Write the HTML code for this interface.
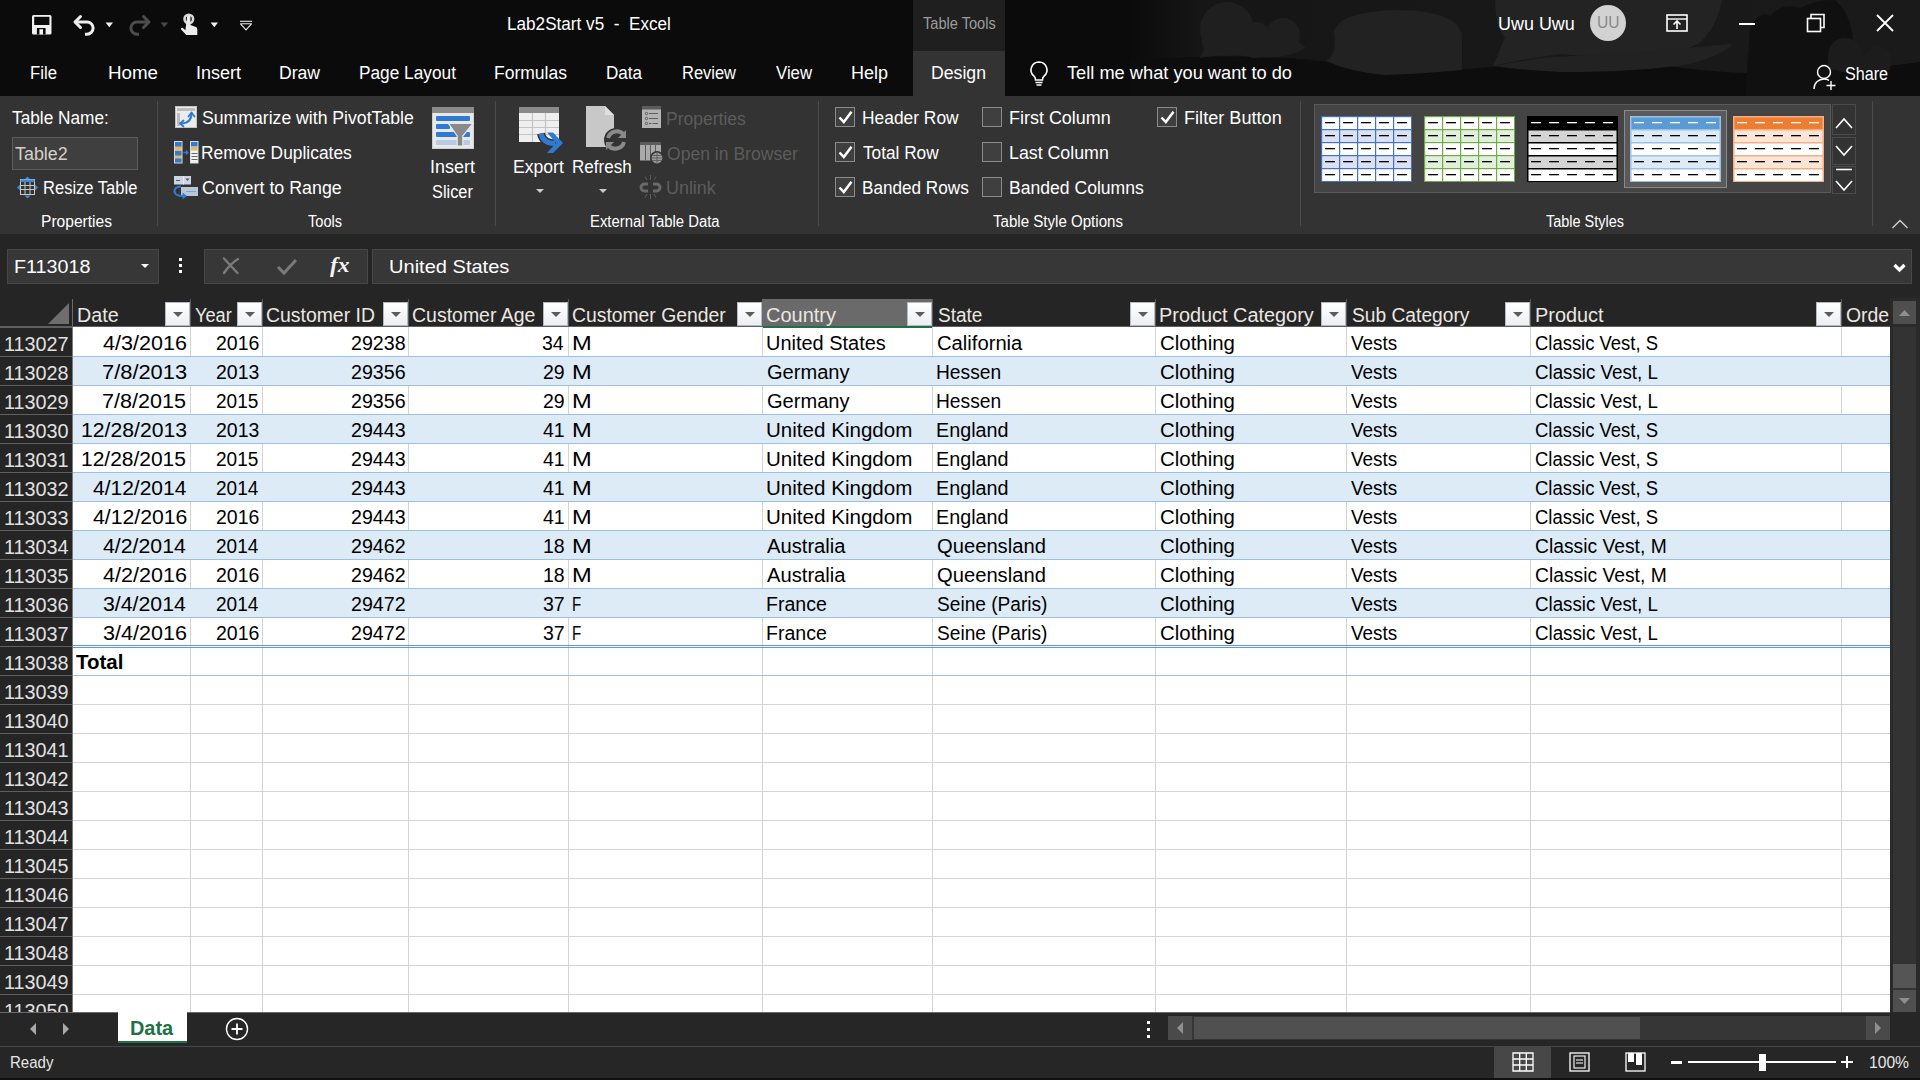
<!DOCTYPE html>
<html><head><meta charset="utf-8"><style>
*{margin:0;padding:0}
html,body{width:1920px;height:1080px;overflow:hidden;background:#222;}
body{position:relative;font-family:"Liberation Sans",sans-serif;}
.r{position:absolute;display:block}
.t{position:absolute;white-space:pre;line-height:1;transform-origin:left center}
.fb{position:absolute;width:25px;height:24px;box-sizing:border-box;border:1px solid #b4bac4;background:linear-gradient(#ffffff,#eceef2)}
.fb::after{content:"";position:absolute;left:7px;top:9px;border-left:5px solid transparent;border-right:5px solid transparent;border-top:5px solid #5c5c5c}
</style></head><body>
<div class="r" style="left:0px;top:0px;width:1920px;height:96px;background:#0b0b0b;"></div>
<svg class="r" style="left:0;top:0" width="1920" height="96" viewBox="0 0 1920 96">
<defs>
<linearGradient id="gbg" x1="0" x2="1" y1="0" y2="0"><stop offset="0" stop-color="#0b0b0b"></stop><stop offset="0.09" stop-color="#161616"></stop><stop offset="0.5" stop-color="#181818"></stop><stop offset="1" stop-color="#1a1a1a"></stop></linearGradient>
<linearGradient id="gv" x1="0" x2="0" y1="0" y2="1"><stop offset="0" stop-color="#0b0b0b" stop-opacity="0"></stop><stop offset="1" stop-color="#0c0c0c" stop-opacity="1"></stop></linearGradient>
</defs>
<rect x="1130" y="0" width="790" height="96" fill="url(#gbg)"></rect>
<path d="M1130 60 Q1250 52 1330 62 Q1420 76 1500 66 Q1600 56 1700 70 Q1800 80 1920 62 L1920 96 L1130 96Z" fill="#0d0d0d"></path>
<path d="M1745 96 L1750 30 Q1758 10 1770 16 Q1782 2 1800 8 Q1815 0 1835 0 Q1856 20 1852 50 Q1846 70 1830 96Z" fill="#101010"></path>
<g fill="#1f1f1f">
<circle cx="1227" cy="29" r="27"></circle><circle cx="1283" cy="35" r="17"></circle><circle cx="1255" cy="40" r="18"></circle>
<path d="M1202 36 L1296 40 L1306 48 Q1285 60 1255 57 Q1225 53 1199 58 Q1206 50 1202 44Z"></path>
</g>
<path fill="#222" d="M1334 32 Q1338 12 1395 10 Q1455 10 1462 34 L1462 70 Q1420 74 1385 75 Q1350 72 1326 61 Q1337 56 1334 32Z"></path>
<path fill="#232323" d="M1495 0 L1722 0 Q1716 30 1698 44 Q1672 56 1640 58 Q1600 58 1560 54 Q1520 60 1493 66 Q1500 50 1505 37 Q1496 30 1495 0Z"></path>
<path fill="#222" d="M1540 58 Q1640 52 1733 44 Q1720 56 1690 64 Q1640 72 1560 72 Q1520 70 1493 66Z"></path>
<g fill="#1c1c1c"><circle cx="1845" cy="55" r="17"></circle><circle cx="1878" cy="59" r="13"></circle><rect x="1828" y="55" width="62" height="15"></rect></g>
</svg>
<div class="r" style="left:913px;top:0px;width:92px;height:51px;background:#1f1f1f;"></div>
<div class="r" style="left:913px;top:51px;width:92px;height:45px;background:#333333;"></div>
<svg class="r" style="left:0px;top:0px;" width="260" height="48" viewBox="0 0 260 48">
<rect x="32" y="15" width="19.5" height="19.5" rx="1.5" fill="#f0f0f0"></rect>
<rect x="34.2" y="16.8" width="15.2" height="8.2" fill="#0b0b0b"></rect>
<rect x="36.9" y="28" width="8.7" height="6.5" fill="#0b0b0b"></rect>
<rect x="39.4" y="29.2" width="3.6" height="5.3" fill="#f0f0f0"></rect>
<path d="M75.5 22 H87 A6.1 6.1 0 0 1 87 34.2 H85" fill="none" stroke="#eeeeee" stroke-width="3"></path>
<path d="M80.5 16.5 L75 22 L80.5 27.5" fill="none" stroke="#eeeeee" stroke-width="3" stroke-linecap="round" stroke-linejoin="round"></path>
<path d="M105.6 22.5 h7.4 l-3.7 4.7z" fill="#f0f0f0"></path>
<path d="M148.5 22 H137 A6.1 6.1 0 0 0 137 34.2 H139" fill="none" stroke="#4d4d4d" stroke-width="3"></path>
<path d="M143.5 16.5 L149 22 L143.5 27.5" fill="none" stroke="#4d4d4d" stroke-width="3" stroke-linecap="round" stroke-linejoin="round"></path>
<path d="M160.6 22.5 h7.4 l-3.7 4.7z" fill="#4a4a4a"></path>
<circle cx="188.8" cy="19" r="4.3" fill="none" stroke="#d8d8d8" stroke-width="2.6"></circle>
<path d="M187.2 15.5 h3.2 v9.5 l5.5 2 q1.4 .6 1.4 2.2 v5.8 h-11 l-5.2-5.5 q-.6-.9.3-1.5 q.9-.6 1.8.2 l2.2 2.1z" fill="#ececec"></path>
<path d="M210.6 22.5 h7.4 l-3.7 4.7z" fill="#f0f0f0"></path>
<path d="M240 21.3 h12" stroke="#e8e8e8" stroke-width="1.1"></path>
<path d="M240.5 23.8 h11 l-5.5 6z" fill="none" stroke="#e8e8e8" stroke-width="1.1" stroke-linejoin="round"></path>
</svg>
<span class="t " style="left: 506.52px; top: 16.19px; font-size: 17.5px; color: rgb(255, 255, 255); transform: scaleX(0.9794);">Lab2Start v5  -  Excel</span>
<span class="t " style="left: 923px; top: 16.46px; font-size: 16px; color: rgb(156, 156, 156); transform: scaleX(0.912);">Table Tools</span>
<span class="t " style="left: 1497.97px; top: 16.19px; font-size: 17.5px; color: rgb(255, 255, 255); transform: scaleX(1.0253);">Uwu Uwu</span>
<div class="r" style="left:1590px;top:5px;width:36px;height:36px;border-radius:50%;background:#d2d2d2"></div>
<span class="t " style="left: 1597.03px; top: 15.46px; font-size: 16px; color: rgb(138, 138, 138); transform: scaleX(0.9743);">UU</span>
<svg class="r" style="left:1665px;top:13px;" width="24" height="20" viewBox="0 0 24 20"><rect x="2" y="2" width="20" height="16" fill="none" stroke="#fff" stroke-width="1.6"></rect><path d="M2 6h20" stroke="#fff" stroke-width="1.4"></path><path d="M12 16V8 M8.5 11.5 L12 8 L15.5 11.5" stroke="#fff" stroke-width="1.6" fill="none"></path></svg>
<div class="r" style="left:1739px;top:23px;width:16px;height:2px;background:#fff;"></div>
<svg class="r" style="left:1805px;top:12px;" width="22" height="22" viewBox="0 0 22 22"><rect x="2.5" y="6.5" width="13" height="13" fill="none" stroke="#fff" stroke-width="1.6"></rect><path d="M6 6.5V2.5h13v13h-3.5" fill="none" stroke="#fff" stroke-width="1.6"></path></svg>
<svg class="r" style="left:1875px;top:13px;" width="20" height="20" viewBox="0 0 20 20"><path d="M2 2L18 18M18 2L2 18" stroke="#fff" stroke-width="1.8"></path></svg>
<span class="t " style="left: 30.07px; top: 64.26px; font-size: 18px; color: rgb(255, 255, 255); transform: scaleX(0.9288);">File</span>
<span class="t " style="left: 107.96px; top: 64.26px; font-size: 18px; color: rgb(255, 255, 255); transform: scaleX(1.0425);">Home</span>
<span class="t " style="left: 196px; top: 64.26px; font-size: 18px; color: rgb(255, 255, 255); transform: scaleX(0.9996);">Insert</span>
<span class="t " style="left: 279.02px; top: 64.26px; font-size: 18px; color: rgb(255, 255, 255); transform: scaleX(0.9761);">Draw</span>
<span class="t " style="left: 359.04px; top: 64.26px; font-size: 18px; color: rgb(255, 255, 255); transform: scaleX(0.9592);">Page Layout</span>
<span class="t " style="left: 494.03px; top: 64.26px; font-size: 18px; color: rgb(255, 255, 255); transform: scaleX(0.9728);">Formulas</span>
<span class="t " style="left: 606.05px; top: 64.26px; font-size: 18px; color: rgb(255, 255, 255); transform: scaleX(0.9471);">Data</span>
<span class="t " style="left: 682.09px; top: 64.26px; font-size: 18px; color: rgb(255, 255, 255); transform: scaleX(0.915);">Review</span>
<span class="t " style="left: 776px; top: 64.26px; font-size: 18px; color: rgb(255, 255, 255); transform: scaleX(0.9322);">View</span>
<span class="t " style="left: 851px; top: 64.26px; font-size: 18px; color: rgb(255, 255, 255); transform: scaleX(0.9998);">Help</span>
<span class="t " style="left: 931.02px; top: 64.26px; font-size: 18px; color: rgb(255, 255, 255); transform: scaleX(0.9811);">Design</span>
<svg class="r" style="left:1027px;top:59px;" width="24" height="28" viewBox="0 0 24 28"><path d="M12 3a8 8 0 0 0-5 14.2c1 .9 1.5 2 1.5 3.3V21h7v-.5c0-1.3.5-2.4 1.5-3.3A8 8 0 0 0 12 3z" fill="none" stroke="#fff" stroke-width="1.6"></path><path d="M8.5 23.5h7M9.5 26h5" stroke="#fff" stroke-width="1.6"></path></svg>
<span class="t " style="left: 1067px; top: 64.26px; font-size: 18px; color: rgb(255, 255, 255); transform: scaleX(1.013);">Tell me what you want to do</span>
<svg class="r" style="left:1812px;top:63px;" width="26" height="28" viewBox="0 0 26 28"><circle cx="12" cy="9" r="6.5" fill="none" stroke="#fff" stroke-width="1.4"></circle><path d="M2 26c0-6 4.5-10 10-10 2 0 3.5.5 5 1.3" fill="none" stroke="#fff" stroke-width="1.4"></path><path d="M19 18v9M14.5 22.5h9" stroke="#fff" stroke-width="1.4"></path></svg>
<span class="t " style="left: 1845px; top: 64.76px; font-size: 18px; color: rgb(255, 255, 255); transform: scaleX(0.8954);">Share</span>
<div class="r" style="left:0px;top:96px;width:1920px;height:138px;background:#333333;"></div>
<div class="r" style="left:157px;top:101px;width:1px;height:125px;background:#4a4a4a;"></div>
<div class="r" style="left:495px;top:101px;width:1px;height:125px;background:#4a4a4a;"></div>
<div class="r" style="left:818px;top:101px;width:1px;height:125px;background:#4a4a4a;"></div>
<div class="r" style="left:1300px;top:101px;width:1px;height:125px;background:#4a4a4a;"></div>
<div class="r" style="left:1872px;top:101px;width:1px;height:125px;background:#4a4a4a;"></div>
<svg class="r" style="left:0px;top:96px;" width="210" height="110" viewBox="0 0 210 110">
<g transform="translate(0,-96)">
<path d="M27.5 176.5 l3 3h-6z M27.5 198.5 l3-3h-6z M17 187.5 l3-3v6z M38 187.5 l-3-3v6z" fill="#3b8ad8"></path>
<rect x="20.5" y="179.5" width="14" height="15" fill="#333" stroke="#c8c8c8" stroke-width="1"></rect>
<rect x="20.5" y="179.5" width="14" height="2.5" fill="#3b8ad8"></rect>
<path d="M20.5 185.5h14M20.5 189.5h14M25 182v12.5M30 182v12.5" stroke="#c8c8c8" stroke-width="1"></path>
<rect x="175.5" y="106.5" width="21" height="21" fill="#ececec" stroke="#c4c4c4"></rect>
<rect x="177" y="108" width="18" height="3" fill="#bdbdbd"></rect><rect x="177" y="113" width="3" height="13" fill="#bdbdbd"></rect>
<path d="M180.5 123.5 C187 123.5 191.5 120.5 191.5 113.5" fill="none" stroke="#2f7bd3" stroke-width="1.9"></path>
<path d="M183.5 120.5 L180 123.5 L183.5 126.5 M188.5 116.5 L191.5 112.5 L194.5 116.5" fill="none" stroke="#2f7bd3" stroke-width="1.9" stroke-linecap="round" stroke-linejoin="round"></path>
<rect x="174.5" y="141.5" width="7.5" height="21.5" fill="#e6b56a" stroke="#dcdcdc" stroke-width="1"></rect>
<rect x="175" y="142" width="6.5" height="4.5" fill="#2f7bd3"></rect><rect x="175" y="151" width="6.5" height="4.5" fill="#2f7bd3"></rect><rect x="175" y="158.5" width="6.5" height="4" fill="#2f7bd3"></rect>
<rect x="190.5" y="141.5" width="7.5" height="21.5" fill="#f2f2f2" stroke="#dcdcdc" stroke-width="1"></rect>
<rect x="191" y="142" width="6.5" height="4.5" fill="#2f7bd3"></rect><rect x="191" y="147" width="6.5" height="3.5" fill="#e6b56a"></rect>
<path d="M191.5 153.5h6M191.5 156.5h6M191.5 159.5h6" stroke="#444" stroke-width="0.8"></path>
<path d="M183.5 152.5h4.5 M186 150.5l2 2-2 2" stroke="#2f7bd3" stroke-width="1.3" fill="none"></path>
<rect x="174" y="176" width="17" height="8.5" fill="#c9d5e4"></rect><path d="M176 180.5h4" stroke="#555" stroke-width="1"></path><rect x="183" y="176" width="1" height="8.5" fill="#ececec"></rect><path d="M185.5 178.5h4l-2 2.5z" fill="#555"></path>
<rect x="181" y="187" width="17" height="9" fill="#b8c8dc"></rect><path d="M186 191.5h10" stroke="#8aa0ba" stroke-width="1"></path>
<path d="M181 186.5 Q174 187 174.5 191.5 Q175 196 183 196" fill="none" stroke="#2f7bd3" stroke-width="2.2"></path>
<path d="M182.5 192.5 l4.5 3.5-4.5 3.5z" fill="#2f7bd3"></path>
</g></svg>
<span class="t " style="left: 12px; top: 110.19px; font-size: 17.5px; color: rgb(255, 255, 255); transform: scaleX(0.9858);">Table Name:</span>
<div class="r" style="left:12px;top:137px;width:124px;height:31px;background:#3f3f3f;border:1px solid #5c5c5c"></div>
<span class="t " style="left: 15px; top: 146.19px; font-size: 17.5px; color: rgb(214, 207, 198); transform: scaleX(1.0229);">Table2</span>
<span class="t " style="left: 43.06px; top: 180.19px; font-size: 17.5px; color: rgb(255, 255, 255); transform: scaleX(0.9446);">Resize Table</span>
<span class="t " style="left: 41.03px; top: 214.46px; font-size: 16px; color: rgb(255, 255, 255); transform: scaleX(0.9733);">Properties</span>
<span class="t " style="left: 202px; top: 110.19px; font-size: 17.5px; color: rgb(255, 255, 255); transform: scaleX(1.0079);">Summarize with PivotTable</span>
<span class="t " style="left: 201.01px; top: 145.19px; font-size: 17.5px; color: rgb(255, 255, 255); transform: scaleX(0.9935);">Remove Duplicates</span>
<span class="t " style="left: 202px; top: 180.19px; font-size: 17.5px; color: rgb(255, 255, 255); transform: scaleX(1.0188);">Convert to Range</span>
<svg class="r" style="left:0px;top:0px;" width="480" height="160" viewBox="0 0 480 160"><rect x="432.5" y="107.5" width="41" height="41" fill="#e8e8e8" stroke="#cfcfcf"></rect><rect x="432" y="107" width="42" height="6" fill="#8a8a8a"></rect>
<rect x="436" y="116" width="34" height="5" rx="1" fill="#2f7bd3"></rect><rect x="436" y="124" width="14" height="5" rx="1" fill="#2f7bd3"></rect><rect x="436" y="132" width="34" height="5" rx="1" fill="#2f7bd3"></rect><rect x="436" y="140" width="34" height="5" rx="1" fill="#b7cbe2"></rect>
<path d="M448.5 123.5 H473 L462.8 136 V146 H457.2 V136Z" fill="#8a8a8a" stroke="#e8e8e8" stroke-width="1.2"></path></svg>
<span class="t " style="left: 429.97px; top: 159.19px; font-size: 17.5px; color: rgb(255, 255, 255); transform: scaleX(1.0255);">Insert</span>
<span class="t " style="left: 432px; top: 183.69px; font-size: 17.5px; color: rgb(255, 255, 255); transform: scaleX(0.9333);">Slicer</span>
<span class="t " style="left: 308px; top: 214.46px; font-size: 16px; color: rgb(255, 255, 255); transform: scaleX(0.9103);">Tools</span>
<svg class="r" style="left:500px;top:100px;" width="80" height="60" viewBox="0 0 80 60"><rect x="19" y="7" width="40" height="35" fill="#efefef"></rect><rect x="19" y="7" width="40" height="6" fill="#8a8a8a"></rect>
<path d="M19 20.5h40M19 27.5h40M19 34.5h40M32.5 13v29M45.5 13v29" stroke="#c4c4c4" stroke-width="1.2"></path>
<path d="M41 33.5 Q43 43.5 55 43.5" fill="none" stroke="#333" stroke-width="8"></path>
<path d="M41 33.5 Q43 43.5 55 43.5" fill="none" stroke="#2f7bd3" stroke-width="5"></path>
<path d="M53 32.5 L63 43 L53 53 H47 L56 43 L47 32.5Z" fill="#2f7bd3"></path></svg>
<span class="t " style="left: 512.99px; top: 159.19px; font-size: 17.5px; color: rgb(255, 255, 255); transform: scaleX(1.0057);">Export</span>
<svg class="r" style="left:534px;top:187px;" width="12" height="8" viewBox="0 0 12 8"><path d="M2 2h8l-4 4z" fill="#ccc"></path></svg>
<svg class="r" style="left:584px;top:104px;" width="46" height="50" viewBox="0 0 46 50"><path d="M2 2h19l9 9v32H2z" fill="#c8c8c8"></path><path d="M21 2v9h9" fill="#e0e0e0"></path><circle cx="32" cy="36" r="12" fill="#333"></circle><path d="M24 34a9 9 0 0 1 16-3 M40 38a9 9 0 0 1-16 3" stroke="#8a8a8a" stroke-width="4" fill="none"></path><path d="M42 26v8h-8z M22 46v-8h8z" fill="#8a8a8a"></path></svg>
<span class="t " style="left: 572.03px; top: 159.19px; font-size: 17.5px; color: rgb(255, 255, 255); transform: scaleX(0.9741);">Refresh</span>
<svg class="r" style="left:597px;top:187px;" width="12" height="8" viewBox="0 0 12 8"><path d="M2 2h8l-4 4z" fill="#ccc"></path></svg>
<svg class="r" style="left:630px;top:100px;" width="40" height="105" viewBox="0 0 40 105"><g transform="translate(-630,-100)">
<rect x="642" y="106" width="19" height="22" fill="#b4b4b4"></rect><rect x="642" y="106" width="19" height="3.5" fill="#5c5c5c"></rect>
<circle cx="646.5" cy="113.5" r="1.2" fill="none" stroke="#555" stroke-width="0.9"></circle><circle cx="646.5" cy="118.5" r="1.2" fill="none" stroke="#555" stroke-width="0.9"></circle><circle cx="646.5" cy="123.5" r="1.2" fill="none" stroke="#555" stroke-width="0.9"></circle>
<path d="M649 113.5h9M649 118.5h9M649 123.5h2.5M652.5 123.5h5.5" stroke="#555" stroke-width="0.9"></path>
<rect x="640" y="142" width="21" height="18.5" fill="#aaaaaa"></rect><rect x="640" y="142" width="21" height="3" fill="#5c5c5c"></rect>
<path d="M645.5 145v15.5M650.5 145v15.5M655.5 145v15.5" stroke="#5c5c5c" stroke-width="1"></path>
<circle cx="657" cy="158" r="6.2" fill="#999" stroke="#333" stroke-width="1.6"></circle>
<path d="M651.5 158h11M657 152.5v11M652.5 155.5h9M652.5 160.5h9" stroke="#555" stroke-width="0.8"></path>
<path d="M648 184 H644.5 a3.3 3.3 0 0 0 0 7 H648 M653 184 H656.5 a3.3 3.3 0 0 1 0 7 H653" stroke="#686868" stroke-width="3" fill="none"></path>
<path d="M650.5 175v5M645 176.5l2 3.5M656 176.5l-2 3.5M650.5 194v5M645 197.5l2-3.5M656 197.5l-2-3.5" stroke="#5e5e5e" stroke-width="1"></path>
</g></svg>
<span class="t " style="left: 666px; top: 110.69px; font-size: 17.5px; color: rgb(92, 92, 92); transform: scaleX(0.9999);">Properties</span>
<span class="t " style="left: 667px; top: 145.69px; font-size: 17.5px; color: rgb(92, 92, 92); transform: scaleX(1.0038);">Open in Browser</span>
<span class="t " style="left: 665.98px; top: 180.19px; font-size: 17.5px; color: rgb(92, 92, 92); transform: scaleX(1.0234);">Unlink</span>
<span class="t " style="left: 590.07px; top: 214.46px; font-size: 16px; color: rgb(255, 255, 255); transform: scaleX(0.9298);">External Table Data</span>
<svg class="r" style="left:835px;top:107px;" width="20" height="20" viewBox="0 0 20 20"><rect x="0.5" y="0.5" width="19" height="19" fill="#3f3f3f" stroke="#8a8a8a"></rect><path d="M4.5 10.5 L8.8 15 L16.5 4.8" stroke="#fff" stroke-width="2.5" fill="none"></path></svg>
<svg class="r" style="left:835px;top:142px;" width="20" height="20" viewBox="0 0 20 20"><rect x="0.5" y="0.5" width="19" height="19" fill="#3f3f3f" stroke="#8a8a8a"></rect><path d="M4.5 10.5 L8.8 15 L16.5 4.8" stroke="#fff" stroke-width="2.5" fill="none"></path></svg>
<svg class="r" style="left:835px;top:177px;" width="20" height="20" viewBox="0 0 20 20"><rect x="0.5" y="0.5" width="19" height="19" fill="#3f3f3f" stroke="#8a8a8a"></rect><path d="M4.5 10.5 L8.8 15 L16.5 4.8" stroke="#fff" stroke-width="2.5" fill="none"></path></svg>
<svg class="r" style="left:982px;top:107px;" width="20" height="20" viewBox="0 0 20 20"><rect x="0.5" y="0.5" width="19" height="19" fill="#3f3f3f" stroke="#8a8a8a"></rect></svg>
<svg class="r" style="left:982px;top:142px;" width="20" height="20" viewBox="0 0 20 20"><rect x="0.5" y="0.5" width="19" height="19" fill="#3f3f3f" stroke="#8a8a8a"></rect></svg>
<svg class="r" style="left:982px;top:177px;" width="20" height="20" viewBox="0 0 20 20"><rect x="0.5" y="0.5" width="19" height="19" fill="#3f3f3f" stroke="#8a8a8a"></rect></svg>
<svg class="r" style="left:1157px;top:107px;" width="20" height="20" viewBox="0 0 20 20"><rect x="0.5" y="0.5" width="19" height="19" fill="#3f3f3f" stroke="#8a8a8a"></rect><path d="M4.5 10.5 L8.8 15 L16.5 4.8" stroke="#fff" stroke-width="2.5" fill="none"></path></svg>
<span class="t " style="left: 862.01px; top: 109.69px; font-size: 17.5px; color: rgb(255, 255, 255); transform: scaleX(0.9935);">Header Row</span>
<span class="t " style="left: 863px; top: 144.69px; font-size: 17.5px; color: rgb(255, 255, 255); transform: scaleX(0.9845);">Total Row</span>
<span class="t " style="left: 862.02px; top: 179.69px; font-size: 17.5px; color: rgb(255, 255, 255); transform: scaleX(0.9796);">Banded Rows</span>
<span class="t " style="left: 1008.97px; top: 109.69px; font-size: 17.5px; color: rgb(255, 255, 255); transform: scaleX(1.0262);">First Column</span>
<span class="t " style="left: 1008.98px; top: 144.69px; font-size: 17.5px; color: rgb(255, 255, 255); transform: scaleX(1.0155);">Last Column</span>
<span class="t " style="left: 1009px; top: 179.69px; font-size: 17.5px; color: rgb(255, 255, 255); transform: scaleX(1.0038);">Banded Columns</span>
<span class="t " style="left: 1183.96px; top: 109.69px; font-size: 17.5px; color: rgb(255, 255, 255); transform: scaleX(1.0366);">Filter Button</span>
<span class="t " style="left: 993px; top: 214.46px; font-size: 16px; color: rgb(255, 255, 255); transform: scaleX(0.943);">Table Style Options</span>
<div class="r" style="left:1314px;top:104px;width:517px;height:89px;background:#444;border:1px solid #5a5a5a;box-sizing:border-box"></div>
<div class="r" style="left:1624px;top:110px;width:103px;height:78px;background:#5a5a5a;border:1px solid #8a8a8a;box-sizing:border-box"></div>
<svg class="r" style="left:1321px;top:116px;" width="91" height="66" viewBox="0 0 91 66"><rect x="0" y="0.0" width="91" height="13.0" fill="#fff"></rect><rect x="0" y="13.0" width="91" height="13.0" fill="#d9e1f2"></rect><rect x="0" y="26.0" width="91" height="13.0" fill="#fff"></rect><rect x="0" y="39.0" width="91" height="13.0" fill="#d9e1f2"></rect><rect x="0" y="52.0" width="91" height="13.0" fill="#fff"></rect><rect x="0.0" y="0" width="1.2" height="66" fill="#4472c4"></rect><rect x="18.0" y="0" width="1.2" height="66" fill="#4472c4"></rect><rect x="36.0" y="0" width="1.2" height="66" fill="#4472c4"></rect><rect x="54.0" y="0" width="1.2" height="66" fill="#4472c4"></rect><rect x="72.0" y="0" width="1.2" height="66" fill="#4472c4"></rect><rect x="90.0" y="0" width="1.2" height="66" fill="#4472c4"></rect><rect x="0" y="0.0" width="91" height="1.2" fill="#4472c4"></rect><rect x="0" y="13.0" width="91" height="1.2" fill="#4472c4"></rect><rect x="0" y="26.0" width="91" height="1.2" fill="#4472c4"></rect><rect x="0" y="39.0" width="91" height="1.2" fill="#4472c4"></rect><rect x="0" y="52.0" width="91" height="1.2" fill="#4472c4"></rect><rect x="0" y="65.0" width="91" height="1.2" fill="#4472c4"></rect><rect x="4.0" y="6.0" width="10" height="1.3" fill="#000"></rect><rect x="22.0" y="6.0" width="10" height="1.3" fill="#000"></rect><rect x="40.0" y="6.0" width="10" height="1.3" fill="#000"></rect><rect x="58.0" y="6.0" width="10" height="1.3" fill="#000"></rect><rect x="76.0" y="6.0" width="10" height="1.3" fill="#000"></rect><rect x="4.0" y="19.0" width="10" height="1.3" fill="#000"></rect><rect x="22.0" y="19.0" width="10" height="1.3" fill="#000"></rect><rect x="40.0" y="19.0" width="10" height="1.3" fill="#000"></rect><rect x="58.0" y="19.0" width="10" height="1.3" fill="#000"></rect><rect x="76.0" y="19.0" width="10" height="1.3" fill="#000"></rect><rect x="4.0" y="32.0" width="10" height="1.3" fill="#000"></rect><rect x="22.0" y="32.0" width="10" height="1.3" fill="#000"></rect><rect x="40.0" y="32.0" width="10" height="1.3" fill="#000"></rect><rect x="58.0" y="32.0" width="10" height="1.3" fill="#000"></rect><rect x="76.0" y="32.0" width="10" height="1.3" fill="#000"></rect><rect x="4.0" y="45.0" width="10" height="1.3" fill="#000"></rect><rect x="22.0" y="45.0" width="10" height="1.3" fill="#000"></rect><rect x="40.0" y="45.0" width="10" height="1.3" fill="#000"></rect><rect x="58.0" y="45.0" width="10" height="1.3" fill="#000"></rect><rect x="76.0" y="45.0" width="10" height="1.3" fill="#000"></rect><rect x="4.0" y="58.0" width="10" height="1.3" fill="#000"></rect><rect x="22.0" y="58.0" width="10" height="1.3" fill="#000"></rect><rect x="40.0" y="58.0" width="10" height="1.3" fill="#000"></rect><rect x="58.0" y="58.0" width="10" height="1.3" fill="#000"></rect><rect x="76.0" y="58.0" width="10" height="1.3" fill="#000"></rect></svg>
<svg class="r" style="left:1424px;top:116px;" width="91" height="66" viewBox="0 0 91 66"><rect x="0" y="0.0" width="91" height="13.0" fill="#fff"></rect><rect x="0" y="13.0" width="91" height="13.0" fill="#e2efda"></rect><rect x="0" y="26.0" width="91" height="13.0" fill="#fff"></rect><rect x="0" y="39.0" width="91" height="13.0" fill="#e2efda"></rect><rect x="0" y="52.0" width="91" height="13.0" fill="#fff"></rect><rect x="0.0" y="0" width="1.2" height="66" fill="#70ad47"></rect><rect x="18.0" y="0" width="1.2" height="66" fill="#70ad47"></rect><rect x="36.0" y="0" width="1.2" height="66" fill="#70ad47"></rect><rect x="54.0" y="0" width="1.2" height="66" fill="#70ad47"></rect><rect x="72.0" y="0" width="1.2" height="66" fill="#70ad47"></rect><rect x="90.0" y="0" width="1.2" height="66" fill="#70ad47"></rect><rect x="0" y="0.0" width="91" height="1.2" fill="#70ad47"></rect><rect x="0" y="13.0" width="91" height="1.2" fill="#70ad47"></rect><rect x="0" y="26.0" width="91" height="1.2" fill="#70ad47"></rect><rect x="0" y="39.0" width="91" height="1.2" fill="#70ad47"></rect><rect x="0" y="52.0" width="91" height="1.2" fill="#70ad47"></rect><rect x="0" y="65.0" width="91" height="1.2" fill="#70ad47"></rect><rect x="4.0" y="6.0" width="10" height="1.3" fill="#000"></rect><rect x="22.0" y="6.0" width="10" height="1.3" fill="#000"></rect><rect x="40.0" y="6.0" width="10" height="1.3" fill="#000"></rect><rect x="58.0" y="6.0" width="10" height="1.3" fill="#000"></rect><rect x="76.0" y="6.0" width="10" height="1.3" fill="#000"></rect><rect x="4.0" y="19.0" width="10" height="1.3" fill="#000"></rect><rect x="22.0" y="19.0" width="10" height="1.3" fill="#000"></rect><rect x="40.0" y="19.0" width="10" height="1.3" fill="#000"></rect><rect x="58.0" y="19.0" width="10" height="1.3" fill="#000"></rect><rect x="76.0" y="19.0" width="10" height="1.3" fill="#000"></rect><rect x="4.0" y="32.0" width="10" height="1.3" fill="#000"></rect><rect x="22.0" y="32.0" width="10" height="1.3" fill="#000"></rect><rect x="40.0" y="32.0" width="10" height="1.3" fill="#000"></rect><rect x="58.0" y="32.0" width="10" height="1.3" fill="#000"></rect><rect x="76.0" y="32.0" width="10" height="1.3" fill="#000"></rect><rect x="4.0" y="45.0" width="10" height="1.3" fill="#000"></rect><rect x="22.0" y="45.0" width="10" height="1.3" fill="#000"></rect><rect x="40.0" y="45.0" width="10" height="1.3" fill="#000"></rect><rect x="58.0" y="45.0" width="10" height="1.3" fill="#000"></rect><rect x="76.0" y="45.0" width="10" height="1.3" fill="#000"></rect><rect x="4.0" y="58.0" width="10" height="1.3" fill="#000"></rect><rect x="22.0" y="58.0" width="10" height="1.3" fill="#000"></rect><rect x="40.0" y="58.0" width="10" height="1.3" fill="#000"></rect><rect x="58.0" y="58.0" width="10" height="1.3" fill="#000"></rect><rect x="76.0" y="58.0" width="10" height="1.3" fill="#000"></rect></svg>
<svg class="r" style="left:1527px;top:116px;" width="91" height="66" viewBox="0 0 91 66"><rect x="0" y="0.0" width="91" height="13.0" fill="#000"></rect><rect x="0" y="13.0" width="91" height="13.0" fill="#d4d4d4"></rect><rect x="0" y="26.0" width="91" height="13.0" fill="#fff"></rect><rect x="0" y="39.0" width="91" height="13.0" fill="#d4d4d4"></rect><rect x="0" y="52.0" width="91" height="13.0" fill="#fff"></rect><rect x="0" y="0.0" width="91" height="1.5" fill="#000"></rect><rect x="0" y="13.0" width="91" height="1.5" fill="#000"></rect><rect x="0" y="26.0" width="91" height="1.5" fill="#000"></rect><rect x="0" y="39.0" width="91" height="1.5" fill="#000"></rect><rect x="0" y="52.0" width="91" height="1.5" fill="#000"></rect><rect x="0" y="65.0" width="91" height="1.5" fill="#000"></rect><rect x="0" y="0" width="1.5" height="66" fill="#000"></rect><rect x="89.5" y="0" width="1.5" height="66" fill="#000"></rect><rect x="4.0" y="6.0" width="10" height="1.3" fill="#fff"></rect><rect x="22.0" y="6.0" width="10" height="1.3" fill="#fff"></rect><rect x="40.0" y="6.0" width="10" height="1.3" fill="#fff"></rect><rect x="58.0" y="6.0" width="10" height="1.3" fill="#fff"></rect><rect x="76.0" y="6.0" width="10" height="1.3" fill="#fff"></rect><rect x="4.0" y="19.0" width="10" height="1.3" fill="#000"></rect><rect x="22.0" y="19.0" width="10" height="1.3" fill="#000"></rect><rect x="40.0" y="19.0" width="10" height="1.3" fill="#000"></rect><rect x="58.0" y="19.0" width="10" height="1.3" fill="#000"></rect><rect x="76.0" y="19.0" width="10" height="1.3" fill="#000"></rect><rect x="4.0" y="32.0" width="10" height="1.3" fill="#000"></rect><rect x="22.0" y="32.0" width="10" height="1.3" fill="#000"></rect><rect x="40.0" y="32.0" width="10" height="1.3" fill="#000"></rect><rect x="58.0" y="32.0" width="10" height="1.3" fill="#000"></rect><rect x="76.0" y="32.0" width="10" height="1.3" fill="#000"></rect><rect x="4.0" y="45.0" width="10" height="1.3" fill="#000"></rect><rect x="22.0" y="45.0" width="10" height="1.3" fill="#000"></rect><rect x="40.0" y="45.0" width="10" height="1.3" fill="#000"></rect><rect x="58.0" y="45.0" width="10" height="1.3" fill="#000"></rect><rect x="76.0" y="45.0" width="10" height="1.3" fill="#000"></rect><rect x="4.0" y="58.0" width="10" height="1.3" fill="#000"></rect><rect x="22.0" y="58.0" width="10" height="1.3" fill="#000"></rect><rect x="40.0" y="58.0" width="10" height="1.3" fill="#000"></rect><rect x="58.0" y="58.0" width="10" height="1.3" fill="#000"></rect><rect x="76.0" y="58.0" width="10" height="1.3" fill="#000"></rect></svg>
<svg class="r" style="left:1630px;top:116px;" width="91" height="66" viewBox="0 0 91 66"><rect x="0" y="0.0" width="91" height="13.0" fill="#5b9bd5"></rect><rect x="0" y="13.0" width="91" height="13.0" fill="#ddebf7"></rect><rect x="0" y="26.0" width="91" height="13.0" fill="#fff"></rect><rect x="0" y="39.0" width="91" height="13.0" fill="#ddebf7"></rect><rect x="0" y="52.0" width="91" height="13.0" fill="#fff"></rect><rect x="0" y="0.0" width="91" height="1.5" fill="#9bc2e6"></rect><rect x="0" y="13.0" width="91" height="1.5" fill="#9bc2e6"></rect><rect x="0" y="26.0" width="91" height="1.5" fill="#9bc2e6"></rect><rect x="0" y="39.0" width="91" height="1.5" fill="#9bc2e6"></rect><rect x="0" y="52.0" width="91" height="1.5" fill="#9bc2e6"></rect><rect x="0" y="65.0" width="91" height="1.5" fill="#9bc2e6"></rect><rect x="0" y="0" width="1.5" height="66" fill="#9bc2e6"></rect><rect x="89.5" y="0" width="1.5" height="66" fill="#9bc2e6"></rect><rect x="4.0" y="6.0" width="10" height="1.3" fill="#fff"></rect><rect x="22.0" y="6.0" width="10" height="1.3" fill="#fff"></rect><rect x="40.0" y="6.0" width="10" height="1.3" fill="#fff"></rect><rect x="58.0" y="6.0" width="10" height="1.3" fill="#fff"></rect><rect x="76.0" y="6.0" width="10" height="1.3" fill="#fff"></rect><rect x="4.0" y="19.0" width="10" height="1.3" fill="#000"></rect><rect x="22.0" y="19.0" width="10" height="1.3" fill="#000"></rect><rect x="40.0" y="19.0" width="10" height="1.3" fill="#000"></rect><rect x="58.0" y="19.0" width="10" height="1.3" fill="#000"></rect><rect x="76.0" y="19.0" width="10" height="1.3" fill="#000"></rect><rect x="4.0" y="32.0" width="10" height="1.3" fill="#000"></rect><rect x="22.0" y="32.0" width="10" height="1.3" fill="#000"></rect><rect x="40.0" y="32.0" width="10" height="1.3" fill="#000"></rect><rect x="58.0" y="32.0" width="10" height="1.3" fill="#000"></rect><rect x="76.0" y="32.0" width="10" height="1.3" fill="#000"></rect><rect x="4.0" y="45.0" width="10" height="1.3" fill="#000"></rect><rect x="22.0" y="45.0" width="10" height="1.3" fill="#000"></rect><rect x="40.0" y="45.0" width="10" height="1.3" fill="#000"></rect><rect x="58.0" y="45.0" width="10" height="1.3" fill="#000"></rect><rect x="76.0" y="45.0" width="10" height="1.3" fill="#000"></rect><rect x="4.0" y="58.0" width="10" height="1.3" fill="#000"></rect><rect x="22.0" y="58.0" width="10" height="1.3" fill="#000"></rect><rect x="40.0" y="58.0" width="10" height="1.3" fill="#000"></rect><rect x="58.0" y="58.0" width="10" height="1.3" fill="#000"></rect><rect x="76.0" y="58.0" width="10" height="1.3" fill="#000"></rect></svg>
<svg class="r" style="left:1733px;top:116px;" width="91" height="66" viewBox="0 0 91 66"><rect x="0" y="0.0" width="91" height="13.0" fill="#ed7d31"></rect><rect x="0" y="13.0" width="91" height="13.0" fill="#fce4d6"></rect><rect x="0" y="26.0" width="91" height="13.0" fill="#fff"></rect><rect x="0" y="39.0" width="91" height="13.0" fill="#fce4d6"></rect><rect x="0" y="52.0" width="91" height="13.0" fill="#fff"></rect><rect x="0" y="0.0" width="91" height="1.5" fill="#f4b084"></rect><rect x="0" y="13.0" width="91" height="1.5" fill="#f4b084"></rect><rect x="0" y="26.0" width="91" height="1.5" fill="#f4b084"></rect><rect x="0" y="39.0" width="91" height="1.5" fill="#f4b084"></rect><rect x="0" y="52.0" width="91" height="1.5" fill="#f4b084"></rect><rect x="0" y="65.0" width="91" height="1.5" fill="#f4b084"></rect><rect x="0" y="0" width="1.5" height="66" fill="#f4b084"></rect><rect x="89.5" y="0" width="1.5" height="66" fill="#f4b084"></rect><rect x="4.0" y="6.0" width="10" height="1.3" fill="#fff"></rect><rect x="22.0" y="6.0" width="10" height="1.3" fill="#fff"></rect><rect x="40.0" y="6.0" width="10" height="1.3" fill="#fff"></rect><rect x="58.0" y="6.0" width="10" height="1.3" fill="#fff"></rect><rect x="76.0" y="6.0" width="10" height="1.3" fill="#fff"></rect><rect x="4.0" y="19.0" width="10" height="1.3" fill="#000"></rect><rect x="22.0" y="19.0" width="10" height="1.3" fill="#000"></rect><rect x="40.0" y="19.0" width="10" height="1.3" fill="#000"></rect><rect x="58.0" y="19.0" width="10" height="1.3" fill="#000"></rect><rect x="76.0" y="19.0" width="10" height="1.3" fill="#000"></rect><rect x="4.0" y="32.0" width="10" height="1.3" fill="#000"></rect><rect x="22.0" y="32.0" width="10" height="1.3" fill="#000"></rect><rect x="40.0" y="32.0" width="10" height="1.3" fill="#000"></rect><rect x="58.0" y="32.0" width="10" height="1.3" fill="#000"></rect><rect x="76.0" y="32.0" width="10" height="1.3" fill="#000"></rect><rect x="4.0" y="45.0" width="10" height="1.3" fill="#000"></rect><rect x="22.0" y="45.0" width="10" height="1.3" fill="#000"></rect><rect x="40.0" y="45.0" width="10" height="1.3" fill="#000"></rect><rect x="58.0" y="45.0" width="10" height="1.3" fill="#000"></rect><rect x="76.0" y="45.0" width="10" height="1.3" fill="#000"></rect><rect x="4.0" y="58.0" width="10" height="1.3" fill="#000"></rect><rect x="22.0" y="58.0" width="10" height="1.3" fill="#000"></rect><rect x="40.0" y="58.0" width="10" height="1.3" fill="#000"></rect><rect x="58.0" y="58.0" width="10" height="1.3" fill="#000"></rect><rect x="76.0" y="58.0" width="10" height="1.3" fill="#000"></rect></svg>
<div class="r" style="left:1832px;top:104px;width:24px;height:31px;border:1px solid #4a4a4a;box-sizing:border-box"></div>
<div class="r" style="left:1832px;top:137px;width:24px;height:28px;border:1px solid #4a4a4a;box-sizing:border-box"></div>
<div class="r" style="left:1832px;top:166px;width:24px;height:28px;border:1px solid #4a4a4a;box-sizing:border-box"></div>
<svg class="r" style="left:1832px;top:104px;" width="24" height="90" viewBox="0 0 24 90"><path d="M4 24 L12 15 L20 24" stroke="#fff" stroke-width="1.6" fill="none"></path><path d="M4 146 L12 155 L20 146" transform="translate(0,-104)" stroke="#fff" stroke-width="1.6" fill="none"></path><path d="M4 65.5h16" stroke="#fff" stroke-width="1.6"></path><path d="M4 77 L12 86 L20 77" stroke="#fff" stroke-width="1.6" fill="none"></path></svg>
<span class="t " style="left: 1546px; top: 214.46px; font-size: 16px; color: rgb(255, 255, 255); transform: scaleX(0.9042);">Table Styles</span>
<svg class="r" style="left:1890px;top:216px;" width="20" height="14" viewBox="0 0 20 14"><path d="M2.5 12 L10 4.5 L17.5 12" stroke="#cfcfcf" stroke-width="1.4" fill="none"></path></svg>
<div class="r" style="left:0px;top:234px;width:1920px;height:64px;background:#252525;"></div>
<div class="r" style="left:7px;top:249px;width:152px;height:35px;background:#373737;border:1px solid #474747;box-sizing:border-box"></div>
<span class="t " style="left: 13.93px; top: 258.34px; font-size: 18.5px; color: rgb(255, 255, 255); transform: scaleX(1.0658);">F113018</span>
<svg class="r" style="left:139px;top:262px;" width="12" height="8" viewBox="0 0 12 8"><path d="M2 2h8l-4 4z" fill="#fff"></path></svg>
<div class="r" style="left:179px;top:257.5px;width:3px;height:3px;background:#fff;"></div>
<div class="r" style="left:179px;top:263.5px;width:3px;height:3px;background:#fff;"></div>
<div class="r" style="left:179px;top:269.5px;width:3px;height:3px;background:#fff;"></div>
<div class="r" style="left:204px;top:249px;width:164px;height:35px;background:#373737;border:1px solid #474747;box-sizing:border-box"></div>
<svg class="r" style="left:221px;top:256px;" width="20" height="20" viewBox="0 0 20 20"><path d="M3 2.5L16.5 17M17 3Q10 7 3 17" stroke="#7a7a7a" stroke-width="2.4" fill="none" stroke-linecap="round"></path></svg>
<svg class="r" style="left:275px;top:256px;" width="24" height="20" viewBox="0 0 24 20"><path d="M3 11 L9 17 L21 4" stroke="#7a7a7a" stroke-width="3" fill="none"></path></svg>
<span class="t " style="left: 330px; top: 255.22px; font-size: 21px; color: rgb(242, 242, 242); font-weight: 700; font-family: &quot;Liberation Serif&quot;, serif; font-style: italic; transform: scaleX(1.1181);">fx</span>
<div class="r" style="left:372px;top:249px;width:1540px;height:35px;background:#373737;border:1px solid #474747;box-sizing:border-box"></div>
<span class="t " style="left: 388.92px; top: 258.34px; font-size: 18.5px; color: rgb(255, 255, 255); transform: scaleX(1.0837);">United States</span>
<svg class="r" style="left:1888px;top:259px;" width="20" height="14" viewBox="0 0 20 14"><path d="M6.5 6 L11.5 11 L16.5 6" stroke="#fff" stroke-width="3.2" fill="none"></path></svg>
<div class="r" style="left:0px;top:298px;width:1890px;height:714px;background:#ffffff;"></div>
<div class="r" style="left:0px;top:298px;width:72px;height:714px;background:#252525;"></div>
<div class="r" style="left:72px;top:298px;width:1818px;height:29px;background:#252525;"></div>
<div class="r" style="left:190px;top:299px;width:1px;height:28px;background:#5a5a5a;"></div>
<div class="r" style="left:262px;top:299px;width:1px;height:28px;background:#5a5a5a;"></div>
<div class="r" style="left:408px;top:299px;width:1px;height:28px;background:#5a5a5a;"></div>
<div class="r" style="left:568px;top:299px;width:1px;height:28px;background:#5a5a5a;"></div>
<div class="r" style="left:762px;top:299px;width:1px;height:28px;background:#5a5a5a;"></div>
<div class="r" style="left:932px;top:299px;width:1px;height:28px;background:#5a5a5a;"></div>
<div class="r" style="left:1155px;top:299px;width:1px;height:28px;background:#5a5a5a;"></div>
<div class="r" style="left:1346px;top:299px;width:1px;height:28px;background:#5a5a5a;"></div>
<div class="r" style="left:1530px;top:299px;width:1px;height:28px;background:#5a5a5a;"></div>
<div class="r" style="left:1841px;top:299px;width:1px;height:28px;background:#5a5a5a;"></div>
<div class="r" style="left:72px;top:299px;width:1px;height:28px;background:#6a6a6a;"></div>
<div class="r" style="left:0px;top:326px;width:1890px;height:1px;background:#5f5f5f;"></div>
<div class="r" style="left:762px;top:299px;width:170px;height:28px;background:#6a6a6a;"></div>
<svg class="r" style="left:47px;top:302px;" width="24" height="24" viewBox="0 0 24 24"><path d="M22 1 L22 22 L1 22Z" fill="#6e6e6e"></path></svg>
<span class="t " style="left: 76.52px; top: 305.07px; font-size: 20px; color: rgb(235, 231, 224); transform: scaleX(0.9848);">Date</span>
<span class="t " style="left: 195px; top: 305.07px; font-size: 20px; color: rgb(235, 231, 224); transform: scaleX(0.908);">Year</span>
<span class="t " style="left: 266.03px; top: 305.07px; font-size: 20px; color: rgb(235, 231, 224); transform: scaleX(0.9702);">Customer ID</span>
<span class="t " style="left: 412.33px; top: 305.07px; font-size: 20px; color: rgb(235, 231, 224); transform: scaleX(0.9739);">Customer Age</span>
<span class="t " style="left: 572.03px; top: 305.07px; font-size: 20px; color: rgb(235, 231, 224); transform: scaleX(0.9666);">Customer Gender</span>
<span class="t " style="left: 766px; top: 305.07px; font-size: 20px; color: rgb(235, 231, 224); transform: scaleX(0.9996);">Country</span>
<span class="t " style="left: 937.6px; top: 305.07px; font-size: 20px; color: rgb(235, 231, 224); transform: scaleX(0.949);">State</span>
<span class="t " style="left: 1159.01px; top: 305.07px; font-size: 20px; color: rgb(235, 231, 224); transform: scaleX(0.9943);">Product Category</span>
<span class="t " style="left: 1351.6px; top: 305.07px; font-size: 20px; color: rgb(235, 231, 224); transform: scaleX(0.96);">Sub Category</span>
<span class="t " style="left: 1534.76px; top: 305.07px; font-size: 20px; color: rgb(235, 231, 224); transform: scaleX(0.9946);">Product</span>
<span class="t " style="left: 1846px; top: 305.07px; font-size: 20px; color: rgb(235, 231, 224); transform: scaleX(0.9698);">Orde</span>
<div class="fb" style="left:165px;top:302px"></div>
<div class="fb" style="left:237px;top:302px"></div>
<div class="fb" style="left:383px;top:302px"></div>
<div class="fb" style="left:543px;top:302px"></div>
<div class="fb" style="left:737px;top:302px"></div>
<div class="fb" style="left:907px;top:302px"></div>
<div class="fb" style="left:1130px;top:302px"></div>
<div class="fb" style="left:1321px;top:302px"></div>
<div class="fb" style="left:1505px;top:302px"></div>
<div class="fb" style="left:1816px;top:302px"></div>
<div class="r" style="left:762px;top:326px;width:170px;height:2px;background:#1e7145;"></div>
<div class="r" style="left:72px;top:356px;width:1818px;height:29px;background:#ddebf7;"></div>
<div class="r" style="left:72px;top:414px;width:1818px;height:29px;background:#ddebf7;"></div>
<div class="r" style="left:72px;top:472px;width:1818px;height:29px;background:#ddebf7;"></div>
<div class="r" style="left:72px;top:530px;width:1818px;height:29px;background:#ddebf7;"></div>
<div class="r" style="left:72px;top:588px;width:1818px;height:29px;background:#ddebf7;"></div>
<div class="r" style="left:190px;top:327px;width:1px;height:29px;background:#d4d4d4;"></div>
<div class="r" style="left:190px;top:385px;width:1px;height:29px;background:#d4d4d4;"></div>
<div class="r" style="left:190px;top:443px;width:1px;height:29px;background:#d4d4d4;"></div>
<div class="r" style="left:190px;top:501px;width:1px;height:29px;background:#d4d4d4;"></div>
<div class="r" style="left:190px;top:559px;width:1px;height:29px;background:#d4d4d4;"></div>
<div class="r" style="left:190px;top:617px;width:1px;height:29px;background:#d4d4d4;"></div>
<div class="r" style="left:190px;top:646px;width:1px;height:29px;background:#d4d4d4;"></div>
<div class="r" style="left:190px;top:675px;width:1px;height:29px;background:#d4d4d4;"></div>
<div class="r" style="left:190px;top:704px;width:1px;height:29px;background:#d4d4d4;"></div>
<div class="r" style="left:190px;top:733px;width:1px;height:29px;background:#d4d4d4;"></div>
<div class="r" style="left:190px;top:762px;width:1px;height:29px;background:#d4d4d4;"></div>
<div class="r" style="left:190px;top:791px;width:1px;height:29px;background:#d4d4d4;"></div>
<div class="r" style="left:190px;top:820px;width:1px;height:29px;background:#d4d4d4;"></div>
<div class="r" style="left:190px;top:849px;width:1px;height:29px;background:#d4d4d4;"></div>
<div class="r" style="left:190px;top:878px;width:1px;height:29px;background:#d4d4d4;"></div>
<div class="r" style="left:190px;top:907px;width:1px;height:29px;background:#d4d4d4;"></div>
<div class="r" style="left:190px;top:936px;width:1px;height:29px;background:#d4d4d4;"></div>
<div class="r" style="left:190px;top:965px;width:1px;height:29px;background:#d4d4d4;"></div>
<div class="r" style="left:190px;top:994px;width:1px;height:29px;background:#d4d4d4;"></div>
<div class="r" style="left:262px;top:327px;width:1px;height:29px;background:#d4d4d4;"></div>
<div class="r" style="left:262px;top:385px;width:1px;height:29px;background:#d4d4d4;"></div>
<div class="r" style="left:262px;top:443px;width:1px;height:29px;background:#d4d4d4;"></div>
<div class="r" style="left:262px;top:501px;width:1px;height:29px;background:#d4d4d4;"></div>
<div class="r" style="left:262px;top:559px;width:1px;height:29px;background:#d4d4d4;"></div>
<div class="r" style="left:262px;top:617px;width:1px;height:29px;background:#d4d4d4;"></div>
<div class="r" style="left:262px;top:646px;width:1px;height:29px;background:#d4d4d4;"></div>
<div class="r" style="left:262px;top:675px;width:1px;height:29px;background:#d4d4d4;"></div>
<div class="r" style="left:262px;top:704px;width:1px;height:29px;background:#d4d4d4;"></div>
<div class="r" style="left:262px;top:733px;width:1px;height:29px;background:#d4d4d4;"></div>
<div class="r" style="left:262px;top:762px;width:1px;height:29px;background:#d4d4d4;"></div>
<div class="r" style="left:262px;top:791px;width:1px;height:29px;background:#d4d4d4;"></div>
<div class="r" style="left:262px;top:820px;width:1px;height:29px;background:#d4d4d4;"></div>
<div class="r" style="left:262px;top:849px;width:1px;height:29px;background:#d4d4d4;"></div>
<div class="r" style="left:262px;top:878px;width:1px;height:29px;background:#d4d4d4;"></div>
<div class="r" style="left:262px;top:907px;width:1px;height:29px;background:#d4d4d4;"></div>
<div class="r" style="left:262px;top:936px;width:1px;height:29px;background:#d4d4d4;"></div>
<div class="r" style="left:262px;top:965px;width:1px;height:29px;background:#d4d4d4;"></div>
<div class="r" style="left:262px;top:994px;width:1px;height:29px;background:#d4d4d4;"></div>
<div class="r" style="left:408px;top:327px;width:1px;height:29px;background:#d4d4d4;"></div>
<div class="r" style="left:408px;top:385px;width:1px;height:29px;background:#d4d4d4;"></div>
<div class="r" style="left:408px;top:443px;width:1px;height:29px;background:#d4d4d4;"></div>
<div class="r" style="left:408px;top:501px;width:1px;height:29px;background:#d4d4d4;"></div>
<div class="r" style="left:408px;top:559px;width:1px;height:29px;background:#d4d4d4;"></div>
<div class="r" style="left:408px;top:617px;width:1px;height:29px;background:#d4d4d4;"></div>
<div class="r" style="left:408px;top:646px;width:1px;height:29px;background:#d4d4d4;"></div>
<div class="r" style="left:408px;top:675px;width:1px;height:29px;background:#d4d4d4;"></div>
<div class="r" style="left:408px;top:704px;width:1px;height:29px;background:#d4d4d4;"></div>
<div class="r" style="left:408px;top:733px;width:1px;height:29px;background:#d4d4d4;"></div>
<div class="r" style="left:408px;top:762px;width:1px;height:29px;background:#d4d4d4;"></div>
<div class="r" style="left:408px;top:791px;width:1px;height:29px;background:#d4d4d4;"></div>
<div class="r" style="left:408px;top:820px;width:1px;height:29px;background:#d4d4d4;"></div>
<div class="r" style="left:408px;top:849px;width:1px;height:29px;background:#d4d4d4;"></div>
<div class="r" style="left:408px;top:878px;width:1px;height:29px;background:#d4d4d4;"></div>
<div class="r" style="left:408px;top:907px;width:1px;height:29px;background:#d4d4d4;"></div>
<div class="r" style="left:408px;top:936px;width:1px;height:29px;background:#d4d4d4;"></div>
<div class="r" style="left:408px;top:965px;width:1px;height:29px;background:#d4d4d4;"></div>
<div class="r" style="left:408px;top:994px;width:1px;height:29px;background:#d4d4d4;"></div>
<div class="r" style="left:568px;top:327px;width:1px;height:29px;background:#d4d4d4;"></div>
<div class="r" style="left:568px;top:385px;width:1px;height:29px;background:#d4d4d4;"></div>
<div class="r" style="left:568px;top:443px;width:1px;height:29px;background:#d4d4d4;"></div>
<div class="r" style="left:568px;top:501px;width:1px;height:29px;background:#d4d4d4;"></div>
<div class="r" style="left:568px;top:559px;width:1px;height:29px;background:#d4d4d4;"></div>
<div class="r" style="left:568px;top:617px;width:1px;height:29px;background:#d4d4d4;"></div>
<div class="r" style="left:568px;top:646px;width:1px;height:29px;background:#d4d4d4;"></div>
<div class="r" style="left:568px;top:675px;width:1px;height:29px;background:#d4d4d4;"></div>
<div class="r" style="left:568px;top:704px;width:1px;height:29px;background:#d4d4d4;"></div>
<div class="r" style="left:568px;top:733px;width:1px;height:29px;background:#d4d4d4;"></div>
<div class="r" style="left:568px;top:762px;width:1px;height:29px;background:#d4d4d4;"></div>
<div class="r" style="left:568px;top:791px;width:1px;height:29px;background:#d4d4d4;"></div>
<div class="r" style="left:568px;top:820px;width:1px;height:29px;background:#d4d4d4;"></div>
<div class="r" style="left:568px;top:849px;width:1px;height:29px;background:#d4d4d4;"></div>
<div class="r" style="left:568px;top:878px;width:1px;height:29px;background:#d4d4d4;"></div>
<div class="r" style="left:568px;top:907px;width:1px;height:29px;background:#d4d4d4;"></div>
<div class="r" style="left:568px;top:936px;width:1px;height:29px;background:#d4d4d4;"></div>
<div class="r" style="left:568px;top:965px;width:1px;height:29px;background:#d4d4d4;"></div>
<div class="r" style="left:568px;top:994px;width:1px;height:29px;background:#d4d4d4;"></div>
<div class="r" style="left:762px;top:327px;width:1px;height:29px;background:#d4d4d4;"></div>
<div class="r" style="left:762px;top:385px;width:1px;height:29px;background:#d4d4d4;"></div>
<div class="r" style="left:762px;top:443px;width:1px;height:29px;background:#d4d4d4;"></div>
<div class="r" style="left:762px;top:501px;width:1px;height:29px;background:#d4d4d4;"></div>
<div class="r" style="left:762px;top:559px;width:1px;height:29px;background:#d4d4d4;"></div>
<div class="r" style="left:762px;top:617px;width:1px;height:29px;background:#d4d4d4;"></div>
<div class="r" style="left:762px;top:646px;width:1px;height:29px;background:#d4d4d4;"></div>
<div class="r" style="left:762px;top:675px;width:1px;height:29px;background:#d4d4d4;"></div>
<div class="r" style="left:762px;top:704px;width:1px;height:29px;background:#d4d4d4;"></div>
<div class="r" style="left:762px;top:733px;width:1px;height:29px;background:#d4d4d4;"></div>
<div class="r" style="left:762px;top:762px;width:1px;height:29px;background:#d4d4d4;"></div>
<div class="r" style="left:762px;top:791px;width:1px;height:29px;background:#d4d4d4;"></div>
<div class="r" style="left:762px;top:820px;width:1px;height:29px;background:#d4d4d4;"></div>
<div class="r" style="left:762px;top:849px;width:1px;height:29px;background:#d4d4d4;"></div>
<div class="r" style="left:762px;top:878px;width:1px;height:29px;background:#d4d4d4;"></div>
<div class="r" style="left:762px;top:907px;width:1px;height:29px;background:#d4d4d4;"></div>
<div class="r" style="left:762px;top:936px;width:1px;height:29px;background:#d4d4d4;"></div>
<div class="r" style="left:762px;top:965px;width:1px;height:29px;background:#d4d4d4;"></div>
<div class="r" style="left:762px;top:994px;width:1px;height:29px;background:#d4d4d4;"></div>
<div class="r" style="left:932px;top:327px;width:1px;height:29px;background:#d4d4d4;"></div>
<div class="r" style="left:932px;top:385px;width:1px;height:29px;background:#d4d4d4;"></div>
<div class="r" style="left:932px;top:443px;width:1px;height:29px;background:#d4d4d4;"></div>
<div class="r" style="left:932px;top:501px;width:1px;height:29px;background:#d4d4d4;"></div>
<div class="r" style="left:932px;top:559px;width:1px;height:29px;background:#d4d4d4;"></div>
<div class="r" style="left:932px;top:617px;width:1px;height:29px;background:#d4d4d4;"></div>
<div class="r" style="left:932px;top:646px;width:1px;height:29px;background:#d4d4d4;"></div>
<div class="r" style="left:932px;top:675px;width:1px;height:29px;background:#d4d4d4;"></div>
<div class="r" style="left:932px;top:704px;width:1px;height:29px;background:#d4d4d4;"></div>
<div class="r" style="left:932px;top:733px;width:1px;height:29px;background:#d4d4d4;"></div>
<div class="r" style="left:932px;top:762px;width:1px;height:29px;background:#d4d4d4;"></div>
<div class="r" style="left:932px;top:791px;width:1px;height:29px;background:#d4d4d4;"></div>
<div class="r" style="left:932px;top:820px;width:1px;height:29px;background:#d4d4d4;"></div>
<div class="r" style="left:932px;top:849px;width:1px;height:29px;background:#d4d4d4;"></div>
<div class="r" style="left:932px;top:878px;width:1px;height:29px;background:#d4d4d4;"></div>
<div class="r" style="left:932px;top:907px;width:1px;height:29px;background:#d4d4d4;"></div>
<div class="r" style="left:932px;top:936px;width:1px;height:29px;background:#d4d4d4;"></div>
<div class="r" style="left:932px;top:965px;width:1px;height:29px;background:#d4d4d4;"></div>
<div class="r" style="left:932px;top:994px;width:1px;height:29px;background:#d4d4d4;"></div>
<div class="r" style="left:1155px;top:327px;width:1px;height:29px;background:#d4d4d4;"></div>
<div class="r" style="left:1155px;top:385px;width:1px;height:29px;background:#d4d4d4;"></div>
<div class="r" style="left:1155px;top:443px;width:1px;height:29px;background:#d4d4d4;"></div>
<div class="r" style="left:1155px;top:501px;width:1px;height:29px;background:#d4d4d4;"></div>
<div class="r" style="left:1155px;top:559px;width:1px;height:29px;background:#d4d4d4;"></div>
<div class="r" style="left:1155px;top:617px;width:1px;height:29px;background:#d4d4d4;"></div>
<div class="r" style="left:1155px;top:646px;width:1px;height:29px;background:#d4d4d4;"></div>
<div class="r" style="left:1155px;top:675px;width:1px;height:29px;background:#d4d4d4;"></div>
<div class="r" style="left:1155px;top:704px;width:1px;height:29px;background:#d4d4d4;"></div>
<div class="r" style="left:1155px;top:733px;width:1px;height:29px;background:#d4d4d4;"></div>
<div class="r" style="left:1155px;top:762px;width:1px;height:29px;background:#d4d4d4;"></div>
<div class="r" style="left:1155px;top:791px;width:1px;height:29px;background:#d4d4d4;"></div>
<div class="r" style="left:1155px;top:820px;width:1px;height:29px;background:#d4d4d4;"></div>
<div class="r" style="left:1155px;top:849px;width:1px;height:29px;background:#d4d4d4;"></div>
<div class="r" style="left:1155px;top:878px;width:1px;height:29px;background:#d4d4d4;"></div>
<div class="r" style="left:1155px;top:907px;width:1px;height:29px;background:#d4d4d4;"></div>
<div class="r" style="left:1155px;top:936px;width:1px;height:29px;background:#d4d4d4;"></div>
<div class="r" style="left:1155px;top:965px;width:1px;height:29px;background:#d4d4d4;"></div>
<div class="r" style="left:1155px;top:994px;width:1px;height:29px;background:#d4d4d4;"></div>
<div class="r" style="left:1346px;top:327px;width:1px;height:29px;background:#d4d4d4;"></div>
<div class="r" style="left:1346px;top:385px;width:1px;height:29px;background:#d4d4d4;"></div>
<div class="r" style="left:1346px;top:443px;width:1px;height:29px;background:#d4d4d4;"></div>
<div class="r" style="left:1346px;top:501px;width:1px;height:29px;background:#d4d4d4;"></div>
<div class="r" style="left:1346px;top:559px;width:1px;height:29px;background:#d4d4d4;"></div>
<div class="r" style="left:1346px;top:617px;width:1px;height:29px;background:#d4d4d4;"></div>
<div class="r" style="left:1346px;top:646px;width:1px;height:29px;background:#d4d4d4;"></div>
<div class="r" style="left:1346px;top:675px;width:1px;height:29px;background:#d4d4d4;"></div>
<div class="r" style="left:1346px;top:704px;width:1px;height:29px;background:#d4d4d4;"></div>
<div class="r" style="left:1346px;top:733px;width:1px;height:29px;background:#d4d4d4;"></div>
<div class="r" style="left:1346px;top:762px;width:1px;height:29px;background:#d4d4d4;"></div>
<div class="r" style="left:1346px;top:791px;width:1px;height:29px;background:#d4d4d4;"></div>
<div class="r" style="left:1346px;top:820px;width:1px;height:29px;background:#d4d4d4;"></div>
<div class="r" style="left:1346px;top:849px;width:1px;height:29px;background:#d4d4d4;"></div>
<div class="r" style="left:1346px;top:878px;width:1px;height:29px;background:#d4d4d4;"></div>
<div class="r" style="left:1346px;top:907px;width:1px;height:29px;background:#d4d4d4;"></div>
<div class="r" style="left:1346px;top:936px;width:1px;height:29px;background:#d4d4d4;"></div>
<div class="r" style="left:1346px;top:965px;width:1px;height:29px;background:#d4d4d4;"></div>
<div class="r" style="left:1346px;top:994px;width:1px;height:29px;background:#d4d4d4;"></div>
<div class="r" style="left:1530px;top:327px;width:1px;height:29px;background:#d4d4d4;"></div>
<div class="r" style="left:1530px;top:385px;width:1px;height:29px;background:#d4d4d4;"></div>
<div class="r" style="left:1530px;top:443px;width:1px;height:29px;background:#d4d4d4;"></div>
<div class="r" style="left:1530px;top:501px;width:1px;height:29px;background:#d4d4d4;"></div>
<div class="r" style="left:1530px;top:559px;width:1px;height:29px;background:#d4d4d4;"></div>
<div class="r" style="left:1530px;top:617px;width:1px;height:29px;background:#d4d4d4;"></div>
<div class="r" style="left:1530px;top:646px;width:1px;height:29px;background:#d4d4d4;"></div>
<div class="r" style="left:1530px;top:675px;width:1px;height:29px;background:#d4d4d4;"></div>
<div class="r" style="left:1530px;top:704px;width:1px;height:29px;background:#d4d4d4;"></div>
<div class="r" style="left:1530px;top:733px;width:1px;height:29px;background:#d4d4d4;"></div>
<div class="r" style="left:1530px;top:762px;width:1px;height:29px;background:#d4d4d4;"></div>
<div class="r" style="left:1530px;top:791px;width:1px;height:29px;background:#d4d4d4;"></div>
<div class="r" style="left:1530px;top:820px;width:1px;height:29px;background:#d4d4d4;"></div>
<div class="r" style="left:1530px;top:849px;width:1px;height:29px;background:#d4d4d4;"></div>
<div class="r" style="left:1530px;top:878px;width:1px;height:29px;background:#d4d4d4;"></div>
<div class="r" style="left:1530px;top:907px;width:1px;height:29px;background:#d4d4d4;"></div>
<div class="r" style="left:1530px;top:936px;width:1px;height:29px;background:#d4d4d4;"></div>
<div class="r" style="left:1530px;top:965px;width:1px;height:29px;background:#d4d4d4;"></div>
<div class="r" style="left:1530px;top:994px;width:1px;height:29px;background:#d4d4d4;"></div>
<div class="r" style="left:1841px;top:327px;width:1px;height:29px;background:#d4d4d4;"></div>
<div class="r" style="left:1841px;top:385px;width:1px;height:29px;background:#d4d4d4;"></div>
<div class="r" style="left:1841px;top:443px;width:1px;height:29px;background:#d4d4d4;"></div>
<div class="r" style="left:1841px;top:501px;width:1px;height:29px;background:#d4d4d4;"></div>
<div class="r" style="left:1841px;top:559px;width:1px;height:29px;background:#d4d4d4;"></div>
<div class="r" style="left:1841px;top:617px;width:1px;height:29px;background:#d4d4d4;"></div>
<div class="r" style="left:1841px;top:646px;width:1px;height:29px;background:#d4d4d4;"></div>
<div class="r" style="left:1841px;top:675px;width:1px;height:29px;background:#d4d4d4;"></div>
<div class="r" style="left:1841px;top:704px;width:1px;height:29px;background:#d4d4d4;"></div>
<div class="r" style="left:1841px;top:733px;width:1px;height:29px;background:#d4d4d4;"></div>
<div class="r" style="left:1841px;top:762px;width:1px;height:29px;background:#d4d4d4;"></div>
<div class="r" style="left:1841px;top:791px;width:1px;height:29px;background:#d4d4d4;"></div>
<div class="r" style="left:1841px;top:820px;width:1px;height:29px;background:#d4d4d4;"></div>
<div class="r" style="left:1841px;top:849px;width:1px;height:29px;background:#d4d4d4;"></div>
<div class="r" style="left:1841px;top:878px;width:1px;height:29px;background:#d4d4d4;"></div>
<div class="r" style="left:1841px;top:907px;width:1px;height:29px;background:#d4d4d4;"></div>
<div class="r" style="left:1841px;top:936px;width:1px;height:29px;background:#d4d4d4;"></div>
<div class="r" style="left:1841px;top:965px;width:1px;height:29px;background:#d4d4d4;"></div>
<div class="r" style="left:1841px;top:994px;width:1px;height:29px;background:#d4d4d4;"></div>
<div class="r" style="left:72px;top:356px;width:1818px;height:1px;background:#9bc2e6;"></div>
<div class="r" style="left:72px;top:385px;width:1818px;height:1px;background:#9bc2e6;"></div>
<div class="r" style="left:72px;top:414px;width:1818px;height:1px;background:#9bc2e6;"></div>
<div class="r" style="left:72px;top:443px;width:1818px;height:1px;background:#9bc2e6;"></div>
<div class="r" style="left:72px;top:472px;width:1818px;height:1px;background:#9bc2e6;"></div>
<div class="r" style="left:72px;top:501px;width:1818px;height:1px;background:#9bc2e6;"></div>
<div class="r" style="left:72px;top:530px;width:1818px;height:1px;background:#9bc2e6;"></div>
<div class="r" style="left:72px;top:559px;width:1818px;height:1px;background:#9bc2e6;"></div>
<div class="r" style="left:72px;top:588px;width:1818px;height:1px;background:#9bc2e6;"></div>
<div class="r" style="left:72px;top:617px;width:1818px;height:1px;background:#9bc2e6;"></div>
<div class="r" style="left:72px;top:645px;width:1818px;height:1px;background:#5b9bd5;"></div>
<div class="r" style="left:72px;top:647px;width:1818px;height:1px;background:#5b9bd5;"></div>
<div class="r" style="left:72px;top:675px;width:1818px;height:1px;background:#9bc2e6;"></div>
<div class="r" style="left:72px;top:704px;width:1818px;height:1px;background:#d4d4d4;"></div>
<div class="r" style="left:72px;top:733px;width:1818px;height:1px;background:#d4d4d4;"></div>
<div class="r" style="left:72px;top:762px;width:1818px;height:1px;background:#d4d4d4;"></div>
<div class="r" style="left:72px;top:791px;width:1818px;height:1px;background:#d4d4d4;"></div>
<div class="r" style="left:72px;top:820px;width:1818px;height:1px;background:#d4d4d4;"></div>
<div class="r" style="left:72px;top:849px;width:1818px;height:1px;background:#d4d4d4;"></div>
<div class="r" style="left:72px;top:878px;width:1818px;height:1px;background:#d4d4d4;"></div>
<div class="r" style="left:72px;top:907px;width:1818px;height:1px;background:#d4d4d4;"></div>
<div class="r" style="left:72px;top:936px;width:1818px;height:1px;background:#d4d4d4;"></div>
<div class="r" style="left:72px;top:965px;width:1818px;height:1px;background:#d4d4d4;"></div>
<div class="r" style="left:72px;top:994px;width:1818px;height:1px;background:#d4d4d4;"></div>
<div class="r" style="left:0px;top:327px;width:72px;height:1px;background:#5f5f5f;"></div>
<div class="r" style="left:0px;top:356px;width:72px;height:1px;background:#5f5f5f;"></div>
<div class="r" style="left:0px;top:385px;width:72px;height:1px;background:#5f5f5f;"></div>
<div class="r" style="left:0px;top:414px;width:72px;height:1px;background:#5f5f5f;"></div>
<div class="r" style="left:0px;top:443px;width:72px;height:1px;background:#5f5f5f;"></div>
<div class="r" style="left:0px;top:472px;width:72px;height:1px;background:#5f5f5f;"></div>
<div class="r" style="left:0px;top:501px;width:72px;height:1px;background:#5f5f5f;"></div>
<div class="r" style="left:0px;top:530px;width:72px;height:1px;background:#5f5f5f;"></div>
<div class="r" style="left:0px;top:559px;width:72px;height:1px;background:#5f5f5f;"></div>
<div class="r" style="left:0px;top:588px;width:72px;height:1px;background:#5f5f5f;"></div>
<div class="r" style="left:0px;top:617px;width:72px;height:1px;background:#5f5f5f;"></div>
<div class="r" style="left:0px;top:646px;width:72px;height:1px;background:#5f5f5f;"></div>
<div class="r" style="left:0px;top:675px;width:72px;height:1px;background:#5f5f5f;"></div>
<div class="r" style="left:0px;top:704px;width:72px;height:1px;background:#5f5f5f;"></div>
<div class="r" style="left:0px;top:733px;width:72px;height:1px;background:#5f5f5f;"></div>
<div class="r" style="left:0px;top:762px;width:72px;height:1px;background:#5f5f5f;"></div>
<div class="r" style="left:0px;top:791px;width:72px;height:1px;background:#5f5f5f;"></div>
<div class="r" style="left:0px;top:820px;width:72px;height:1px;background:#5f5f5f;"></div>
<div class="r" style="left:0px;top:849px;width:72px;height:1px;background:#5f5f5f;"></div>
<div class="r" style="left:0px;top:878px;width:72px;height:1px;background:#5f5f5f;"></div>
<div class="r" style="left:0px;top:907px;width:72px;height:1px;background:#5f5f5f;"></div>
<div class="r" style="left:0px;top:936px;width:72px;height:1px;background:#5f5f5f;"></div>
<div class="r" style="left:0px;top:965px;width:72px;height:1px;background:#5f5f5f;"></div>
<div class="r" style="left:0px;top:994px;width:72px;height:1px;background:#5f5f5f;"></div>
<div class="r" style="left:72px;top:327px;width:1px;height:685px;background:#7a7a7a;"></div>
<span class="t " style="left: 3.51px; top: 333.57px; font-size: 20px; color: rgb(224, 224, 224); transform: scaleX(0.9902);">113027</span>
<span class="t " style="left: 3.51px; top: 362.57px; font-size: 20px; color: rgb(224, 224, 224); transform: scaleX(0.9902);">113028</span>
<span class="t " style="left: 3.51px; top: 391.57px; font-size: 20px; color: rgb(224, 224, 224); transform: scaleX(0.9902);">113029</span>
<span class="t " style="left: 3.51px; top: 420.57px; font-size: 20px; color: rgb(224, 224, 224); transform: scaleX(0.9902);">113030</span>
<span class="t " style="left: 3.51px; top: 449.57px; font-size: 20px; color: rgb(224, 224, 224); transform: scaleX(0.9902);">113031</span>
<span class="t " style="left: 3.51px; top: 478.57px; font-size: 20px; color: rgb(224, 224, 224); transform: scaleX(0.9902);">113032</span>
<span class="t " style="left: 3.51px; top: 507.57px; font-size: 20px; color: rgb(224, 224, 224); transform: scaleX(0.9902);">113033</span>
<span class="t " style="left: 3.51px; top: 536.57px; font-size: 20px; color: rgb(224, 224, 224); transform: scaleX(0.9902);">113034</span>
<span class="t " style="left: 3.51px; top: 565.57px; font-size: 20px; color: rgb(224, 224, 224); transform: scaleX(0.9902);">113035</span>
<span class="t " style="left: 3.51px; top: 594.57px; font-size: 20px; color: rgb(224, 224, 224); transform: scaleX(0.9902);">113036</span>
<span class="t " style="left: 3.51px; top: 623.57px; font-size: 20px; color: rgb(224, 224, 224); transform: scaleX(0.9902);">113037</span>
<span class="t " style="left: 3.51px; top: 652.57px; font-size: 20px; color: rgb(224, 224, 224); transform: scaleX(0.9902);">113038</span>
<span class="t " style="left: 3.51px; top: 681.57px; font-size: 20px; color: rgb(224, 224, 224); transform: scaleX(0.9902);">113039</span>
<span class="t " style="left: 3.51px; top: 710.57px; font-size: 20px; color: rgb(224, 224, 224); transform: scaleX(0.9902);">113040</span>
<span class="t " style="left: 3.51px; top: 739.57px; font-size: 20px; color: rgb(224, 224, 224); transform: scaleX(0.9902);">113041</span>
<span class="t " style="left: 3.51px; top: 768.57px; font-size: 20px; color: rgb(224, 224, 224); transform: scaleX(0.9902);">113042</span>
<span class="t " style="left: 3.51px; top: 797.57px; font-size: 20px; color: rgb(224, 224, 224); transform: scaleX(0.9902);">113043</span>
<span class="t " style="left: 3.51px; top: 826.57px; font-size: 20px; color: rgb(224, 224, 224); transform: scaleX(0.9902);">113044</span>
<span class="t " style="left: 3.51px; top: 855.57px; font-size: 20px; color: rgb(224, 224, 224); transform: scaleX(0.9902);">113045</span>
<span class="t " style="left: 3.51px; top: 884.57px; font-size: 20px; color: rgb(224, 224, 224); transform: scaleX(0.9902);">113046</span>
<span class="t " style="left: 3.51px; top: 913.57px; font-size: 20px; color: rgb(224, 224, 224); transform: scaleX(0.9902);">113047</span>
<span class="t " style="left: 3.51px; top: 942.57px; font-size: 20px; color: rgb(224, 224, 224); transform: scaleX(0.9902);">113048</span>
<span class="t " style="left: 3.51px; top: 971.57px; font-size: 20px; color: rgb(224, 224, 224); transform: scaleX(0.9902);">113049</span>
<span class="t " style="left: 3.51px; top: 1000.57px; font-size: 20px; color: rgb(224, 224, 224); transform: scaleX(0.9902);">113050</span>
<span class="t " style="left: 103.25px; top: 334.49px; font-size: 19.5px; color: rgb(0, 0, 0); transform: scaleX(1.1058);">4/3/2016</span>
<span class="t " style="left: 215.5px; top: 334.49px; font-size: 19.5px; color: rgb(0, 0, 0); transform: scaleX(0.9992);">2016</span>
<span class="t " style="left: 350.5px; top: 334.49px; font-size: 19.5px; color: rgb(0, 0, 0); transform: scaleX(1.0069);">29238</span>
<span class="t " style="left: 541.91px; top: 334.49px; font-size: 19.5px; color: rgb(0, 0, 0);">34</span>
<span class="t " style="left: 571.79px; top: 334.49px; font-size: 19.5px; color: rgb(0, 0, 0); transform: scaleX(1.2143);">M</span>
<span class="t " style="left: 765.98px; top: 334.49px; font-size: 19.5px; color: rgb(0, 0, 0); transform: scaleX(1.0231);">United States</span>
<span class="t " style="left: 937px; top: 334.49px; font-size: 19.5px; color: rgb(0, 0, 0); transform: scaleX(1.036);">California</span>
<span class="t " style="left: 1159.7px; top: 334.49px; font-size: 19.5px; color: rgb(0, 0, 0); transform: scaleX(1.0467);">Clothing</span>
<span class="t " style="left: 1350.5px; top: 334.49px; font-size: 19.5px; color: rgb(0, 0, 0); transform: scaleX(0.9699);">Vests</span>
<span class="t " style="left: 1534.7px; top: 334.49px; font-size: 19.5px; color: rgb(0, 0, 0); transform: scaleX(0.9459);">Classic Vest, S</span>
<span class="t " style="left: 102.13px; top: 363.49px; font-size: 19.5px; color: rgb(0, 0, 0); transform: scaleX(1.1207);">7/8/2013</span>
<span class="t " style="left: 215.5px; top: 363.49px; font-size: 19.5px; color: rgb(0, 0, 0); transform: scaleX(0.9992);">2013</span>
<span class="t " style="left: 350.5px; top: 363.49px; font-size: 19.5px; color: rgb(0, 0, 0); transform: scaleX(1.0069);">29356</span>
<span class="t " style="left: 542.91px; top: 363.49px; font-size: 19.5px; color: rgb(0, 0, 0);">29</span>
<span class="t " style="left: 571.79px; top: 363.49px; font-size: 19.5px; color: rgb(0, 0, 0); transform: scaleX(1.2143);">M</span>
<span class="t " style="left: 767px; top: 363.49px; font-size: 19.5px; color: rgb(0, 0, 0); transform: scaleX(1.0293);">Germany</span>
<span class="t " style="left: 936.02px; top: 363.49px; font-size: 19.5px; color: rgb(0, 0, 0); transform: scaleX(0.9849);">Hessen</span>
<span class="t " style="left: 1159.7px; top: 363.49px; font-size: 19.5px; color: rgb(0, 0, 0); transform: scaleX(1.0467);">Clothing</span>
<span class="t " style="left: 1350.5px; top: 363.49px; font-size: 19.5px; color: rgb(0, 0, 0); transform: scaleX(0.9699);">Vests</span>
<span class="t " style="left: 1534.7px; top: 363.49px; font-size: 19.5px; color: rgb(0, 0, 0); transform: scaleX(0.9607);">Classic Vest, L</span>
<span class="t " style="left: 102.14px; top: 392.49px; font-size: 19.5px; color: rgb(0, 0, 0); transform: scaleX(1.1058);">7/8/2015</span>
<span class="t " style="left: 215.5px; top: 392.49px; font-size: 19.5px; color: rgb(0, 0, 0); transform: scaleX(0.9762);">2015</span>
<span class="t " style="left: 350.5px; top: 392.49px; font-size: 19.5px; color: rgb(0, 0, 0); transform: scaleX(1.0069);">29356</span>
<span class="t " style="left: 542.91px; top: 392.49px; font-size: 19.5px; color: rgb(0, 0, 0);">29</span>
<span class="t " style="left: 571.79px; top: 392.49px; font-size: 19.5px; color: rgb(0, 0, 0); transform: scaleX(1.2143);">M</span>
<span class="t " style="left: 767px; top: 392.49px; font-size: 19.5px; color: rgb(0, 0, 0); transform: scaleX(1.0293);">Germany</span>
<span class="t " style="left: 936.02px; top: 392.49px; font-size: 19.5px; color: rgb(0, 0, 0); transform: scaleX(0.9849);">Hessen</span>
<span class="t " style="left: 1159.7px; top: 392.49px; font-size: 19.5px; color: rgb(0, 0, 0); transform: scaleX(1.0467);">Clothing</span>
<span class="t " style="left: 1350.5px; top: 392.49px; font-size: 19.5px; color: rgb(0, 0, 0); transform: scaleX(0.9699);">Vests</span>
<span class="t " style="left: 1534.7px; top: 392.49px; font-size: 19.5px; color: rgb(0, 0, 0); transform: scaleX(0.9607);">Classic Vest, L</span>
<span class="t " style="left: 81.16px; top: 421.49px; font-size: 19.5px; color: rgb(0, 0, 0); transform: scaleX(1.0862);">12/28/2013</span>
<span class="t " style="left: 215.5px; top: 421.49px; font-size: 19.5px; color: rgb(0, 0, 0); transform: scaleX(0.9992);">2013</span>
<span class="t " style="left: 350.5px; top: 421.49px; font-size: 19.5px; color: rgb(0, 0, 0); transform: scaleX(1.0069);">29443</span>
<span class="t " style="left: 542.91px; top: 421.49px; font-size: 19.5px; color: rgb(0, 0, 0);">41</span>
<span class="t " style="left: 571.79px; top: 421.49px; font-size: 19.5px; color: rgb(0, 0, 0); transform: scaleX(1.2143);">M</span>
<span class="t " style="left: 765.95px; top: 421.49px; font-size: 19.5px; color: rgb(0, 0, 0); transform: scaleX(1.0549);">United Kingdom</span>
<span class="t " style="left: 935.99px; top: 421.49px; font-size: 19.5px; color: rgb(0, 0, 0); transform: scaleX(1.0126);">England</span>
<span class="t " style="left: 1159.7px; top: 421.49px; font-size: 19.5px; color: rgb(0, 0, 0); transform: scaleX(1.0467);">Clothing</span>
<span class="t " style="left: 1350.5px; top: 421.49px; font-size: 19.5px; color: rgb(0, 0, 0); transform: scaleX(0.9699);">Vests</span>
<span class="t " style="left: 1534.7px; top: 421.49px; font-size: 19.5px; color: rgb(0, 0, 0); transform: scaleX(0.9459);">Classic Vest, S</span>
<span class="t " style="left: 81.18px; top: 450.49px; font-size: 19.5px; color: rgb(0, 0, 0); transform: scaleX(1.0749);">12/28/2015</span>
<span class="t " style="left: 215.5px; top: 450.49px; font-size: 19.5px; color: rgb(0, 0, 0); transform: scaleX(0.9762);">2015</span>
<span class="t " style="left: 350.5px; top: 450.49px; font-size: 19.5px; color: rgb(0, 0, 0); transform: scaleX(1.0069);">29443</span>
<span class="t " style="left: 542.91px; top: 450.49px; font-size: 19.5px; color: rgb(0, 0, 0);">41</span>
<span class="t " style="left: 571.79px; top: 450.49px; font-size: 19.5px; color: rgb(0, 0, 0); transform: scaleX(1.2143);">M</span>
<span class="t " style="left: 765.95px; top: 450.49px; font-size: 19.5px; color: rgb(0, 0, 0); transform: scaleX(1.0549);">United Kingdom</span>
<span class="t " style="left: 935.99px; top: 450.49px; font-size: 19.5px; color: rgb(0, 0, 0); transform: scaleX(1.0126);">England</span>
<span class="t " style="left: 1159.7px; top: 450.49px; font-size: 19.5px; color: rgb(0, 0, 0); transform: scaleX(1.0467);">Clothing</span>
<span class="t " style="left: 1350.5px; top: 450.49px; font-size: 19.5px; color: rgb(0, 0, 0); transform: scaleX(0.9699);">Vests</span>
<span class="t " style="left: 1534.7px; top: 450.49px; font-size: 19.5px; color: rgb(0, 0, 0); transform: scaleX(0.9459);">Classic Vest, S</span>
<span class="t " style="left: 92.75px; top: 479.49px; font-size: 19.5px; color: rgb(0, 0, 0); transform: scaleX(1.0759);">4/12/2014</span>
<span class="t " style="left: 215.5px; top: 479.49px; font-size: 19.5px; color: rgb(0, 0, 0); transform: scaleX(0.9762);">2014</span>
<span class="t " style="left: 350.5px; top: 479.49px; font-size: 19.5px; color: rgb(0, 0, 0); transform: scaleX(1.0069);">29443</span>
<span class="t " style="left: 542.91px; top: 479.49px; font-size: 19.5px; color: rgb(0, 0, 0);">41</span>
<span class="t " style="left: 571.79px; top: 479.49px; font-size: 19.5px; color: rgb(0, 0, 0); transform: scaleX(1.2143);">M</span>
<span class="t " style="left: 765.95px; top: 479.49px; font-size: 19.5px; color: rgb(0, 0, 0); transform: scaleX(1.0549);">United Kingdom</span>
<span class="t " style="left: 935.99px; top: 479.49px; font-size: 19.5px; color: rgb(0, 0, 0); transform: scaleX(1.0126);">England</span>
<span class="t " style="left: 1159.7px; top: 479.49px; font-size: 19.5px; color: rgb(0, 0, 0); transform: scaleX(1.0467);">Clothing</span>
<span class="t " style="left: 1350.5px; top: 479.49px; font-size: 19.5px; color: rgb(0, 0, 0); transform: scaleX(0.9699);">Vests</span>
<span class="t " style="left: 1534.7px; top: 479.49px; font-size: 19.5px; color: rgb(0, 0, 0); transform: scaleX(0.9459);">Classic Vest, S</span>
<span class="t " style="left: 92.75px; top: 508.49px; font-size: 19.5px; color: rgb(0, 0, 0); transform: scaleX(1.0884);">4/12/2016</span>
<span class="t " style="left: 215.5px; top: 508.49px; font-size: 19.5px; color: rgb(0, 0, 0); transform: scaleX(0.9992);">2016</span>
<span class="t " style="left: 350.5px; top: 508.49px; font-size: 19.5px; color: rgb(0, 0, 0); transform: scaleX(1.0069);">29443</span>
<span class="t " style="left: 542.91px; top: 508.49px; font-size: 19.5px; color: rgb(0, 0, 0);">41</span>
<span class="t " style="left: 571.79px; top: 508.49px; font-size: 19.5px; color: rgb(0, 0, 0); transform: scaleX(1.2143);">M</span>
<span class="t " style="left: 765.95px; top: 508.49px; font-size: 19.5px; color: rgb(0, 0, 0); transform: scaleX(1.0549);">United Kingdom</span>
<span class="t " style="left: 935.99px; top: 508.49px; font-size: 19.5px; color: rgb(0, 0, 0); transform: scaleX(1.0126);">England</span>
<span class="t " style="left: 1159.7px; top: 508.49px; font-size: 19.5px; color: rgb(0, 0, 0); transform: scaleX(1.0467);">Clothing</span>
<span class="t " style="left: 1350.5px; top: 508.49px; font-size: 19.5px; color: rgb(0, 0, 0); transform: scaleX(0.9699);">Vests</span>
<span class="t " style="left: 1534.7px; top: 508.49px; font-size: 19.5px; color: rgb(0, 0, 0); transform: scaleX(0.9459);">Classic Vest, S</span>
<span class="t " style="left: 103.25px; top: 537.49px; font-size: 19.5px; color: rgb(0, 0, 0); transform: scaleX(1.0912);">4/2/2014</span>
<span class="t " style="left: 215.5px; top: 537.49px; font-size: 19.5px; color: rgb(0, 0, 0); transform: scaleX(0.9762);">2014</span>
<span class="t " style="left: 350.5px; top: 537.49px; font-size: 19.5px; color: rgb(0, 0, 0); transform: scaleX(1.0069);">29462</span>
<span class="t " style="left: 542.91px; top: 537.49px; font-size: 19.5px; color: rgb(0, 0, 0);">18</span>
<span class="t " style="left: 571.79px; top: 537.49px; font-size: 19.5px; color: rgb(0, 0, 0); transform: scaleX(1.2143);">M</span>
<span class="t " style="left: 767px; top: 537.49px; font-size: 19.5px; color: rgb(0, 0, 0); transform: scaleX(1.0352);">Australia</span>
<span class="t " style="left: 937px; top: 537.49px; font-size: 19.5px; color: rgb(0, 0, 0); transform: scaleX(1.0353);">Queensland</span>
<span class="t " style="left: 1159.7px; top: 537.49px; font-size: 19.5px; color: rgb(0, 0, 0); transform: scaleX(1.0467);">Clothing</span>
<span class="t " style="left: 1350.5px; top: 537.49px; font-size: 19.5px; color: rgb(0, 0, 0); transform: scaleX(0.9699);">Vests</span>
<span class="t " style="left: 1534.7px; top: 537.49px; font-size: 19.5px; color: rgb(0, 0, 0); transform: scaleX(0.9884);">Classic Vest, M</span>
<span class="t " style="left: 103.25px; top: 566.49px; font-size: 19.5px; color: rgb(0, 0, 0); transform: scaleX(1.1058);">4/2/2016</span>
<span class="t " style="left: 215.5px; top: 566.49px; font-size: 19.5px; color: rgb(0, 0, 0); transform: scaleX(0.9992);">2016</span>
<span class="t " style="left: 350.5px; top: 566.49px; font-size: 19.5px; color: rgb(0, 0, 0); transform: scaleX(1.0069);">29462</span>
<span class="t " style="left: 542.91px; top: 566.49px; font-size: 19.5px; color: rgb(0, 0, 0);">18</span>
<span class="t " style="left: 571.79px; top: 566.49px; font-size: 19.5px; color: rgb(0, 0, 0); transform: scaleX(1.2143);">M</span>
<span class="t " style="left: 767px; top: 566.49px; font-size: 19.5px; color: rgb(0, 0, 0); transform: scaleX(1.0352);">Australia</span>
<span class="t " style="left: 937px; top: 566.49px; font-size: 19.5px; color: rgb(0, 0, 0); transform: scaleX(1.0353);">Queensland</span>
<span class="t " style="left: 1159.7px; top: 566.49px; font-size: 19.5px; color: rgb(0, 0, 0); transform: scaleX(1.0467);">Clothing</span>
<span class="t " style="left: 1350.5px; top: 566.49px; font-size: 19.5px; color: rgb(0, 0, 0); transform: scaleX(0.9699);">Vests</span>
<span class="t " style="left: 1534.7px; top: 566.49px; font-size: 19.5px; color: rgb(0, 0, 0); transform: scaleX(0.9884);">Classic Vest, M</span>
<span class="t " style="left: 103.25px; top: 595.49px; font-size: 19.5px; color: rgb(0, 0, 0); transform: scaleX(1.0912);">3/4/2014</span>
<span class="t " style="left: 215.5px; top: 595.49px; font-size: 19.5px; color: rgb(0, 0, 0); transform: scaleX(0.9762);">2014</span>
<span class="t " style="left: 350.5px; top: 595.49px; font-size: 19.5px; color: rgb(0, 0, 0); transform: scaleX(1.0069);">29472</span>
<span class="t " style="left: 542.91px; top: 595.49px; font-size: 19.5px; color: rgb(0, 0, 0);">37</span>
<span class="t " style="left: 572.23px; top: 595.49px; font-size: 19.5px; color: rgb(0, 0, 0); transform: scaleX(0.7727);">F</span>
<span class="t " style="left: 766px; top: 595.49px; font-size: 19.5px; color: rgb(0, 0, 0); transform: scaleX(1.0026);">France</span>
<span class="t " style="left: 937px; top: 595.49px; font-size: 19.5px; color: rgb(0, 0, 0); transform: scaleX(0.9803);">Seine (Paris)</span>
<span class="t " style="left: 1159.7px; top: 595.49px; font-size: 19.5px; color: rgb(0, 0, 0); transform: scaleX(1.0467);">Clothing</span>
<span class="t " style="left: 1350.5px; top: 595.49px; font-size: 19.5px; color: rgb(0, 0, 0); transform: scaleX(0.9699);">Vests</span>
<span class="t " style="left: 1534.7px; top: 595.49px; font-size: 19.5px; color: rgb(0, 0, 0); transform: scaleX(0.9607);">Classic Vest, L</span>
<span class="t " style="left: 103.25px; top: 624.49px; font-size: 19.5px; color: rgb(0, 0, 0); transform: scaleX(1.1058);">3/4/2016</span>
<span class="t " style="left: 215.5px; top: 624.49px; font-size: 19.5px; color: rgb(0, 0, 0); transform: scaleX(0.9992);">2016</span>
<span class="t " style="left: 350.5px; top: 624.49px; font-size: 19.5px; color: rgb(0, 0, 0); transform: scaleX(1.0069);">29472</span>
<span class="t " style="left: 542.91px; top: 624.49px; font-size: 19.5px; color: rgb(0, 0, 0);">37</span>
<span class="t " style="left: 572.23px; top: 624.49px; font-size: 19.5px; color: rgb(0, 0, 0); transform: scaleX(0.7727);">F</span>
<span class="t " style="left: 766px; top: 624.49px; font-size: 19.5px; color: rgb(0, 0, 0); transform: scaleX(1.0026);">France</span>
<span class="t " style="left: 937px; top: 624.49px; font-size: 19.5px; color: rgb(0, 0, 0); transform: scaleX(0.9803);">Seine (Paris)</span>
<span class="t " style="left: 1159.7px; top: 624.49px; font-size: 19.5px; color: rgb(0, 0, 0); transform: scaleX(1.0467);">Clothing</span>
<span class="t " style="left: 1350.5px; top: 624.49px; font-size: 19.5px; color: rgb(0, 0, 0); transform: scaleX(0.9699);">Vests</span>
<span class="t " style="left: 1534.7px; top: 624.49px; font-size: 19.5px; color: rgb(0, 0, 0); transform: scaleX(0.9607);">Classic Vest, L</span>
<span class="t " style="left: 76px; top: 653.49px; font-size: 19.5px; color: rgb(0, 0, 0); font-weight: 700; transform: scaleX(1.0511);">Total</span>
<div class="r" style="left:1890px;top:298px;width:30px;height:714px;background:#2a2a2a;"></div>
<div class="r" style="left:1893px;top:327px;width:23px;height:685px;background:#333333;"></div>
<div class="r" style="left:1893px;top:301px;width:23px;height:23px;background:#4f4f4f;"></div>
<svg class="r" style="left:1893px;top:301px;" width="23" height="23" viewBox="0 0 23 23"><path d="M6 15 L11.5 9 L17 15z" fill="#8f8f8f"></path></svg>
<div class="r" style="left:1893px;top:964px;width:23px;height:24px;background:#555555;"></div>
<div class="r" style="left:1893px;top:990px;width:23px;height:22px;background:#4f4f4f;"></div>
<svg class="r" style="left:1893px;top:990px;" width="23" height="22" viewBox="0 0 23 22"><path d="M6 8 L11.5 14 L17 8z" fill="#8f8f8f"></path></svg>
<div class="r" style="left:0px;top:1012px;width:1920px;height:34px;background:#262626;"></div>
<div class="r" style="left:0px;top:1012px;width:1890px;height:1px;background:#6a6a6a;"></div>
<svg class="r" style="left:26px;top:1021px;" width="14" height="16" viewBox="0 0 14 16"><path d="M10 2 L4 8 L10 14z" fill="#a8a8a8"></path></svg>
<svg class="r" style="left:59px;top:1021px;" width="14" height="16" viewBox="0 0 14 16"><path d="M4 2 L10 8 L4 14z" fill="#a8a8a8"></path></svg>
<div class="r" style="left:118px;top:1012px;width:69px;height:31px;background:#ffffff;"></div>
<div class="r" style="left:118px;top:1041px;width:69px;height:2px;background:#1e7145;"></div>
<span class="t " style="left: 130.01px; top: 1017.57px; font-size: 20px; color: rgb(30, 113, 69); font-weight: 700; transform: scaleX(0.9948);">Data</span>
<svg class="r" style="left:224px;top:1016px;" width="26" height="26" viewBox="0 0 26 26"><circle cx="13" cy="13" r="10.5" fill="none" stroke="#fff" stroke-width="1.4"></circle><path d="M13 7.5v11M7.5 13h11" stroke="#fff" stroke-width="1.8"></path></svg>
<div class="r" style="left:1147px;top:1021px;width:3px;height:3px;background:#fff;"></div>
<div class="r" style="left:1147px;top:1028px;width:3px;height:3px;background:#fff;"></div>
<div class="r" style="left:1147px;top:1035px;width:3px;height:3px;background:#fff;"></div>
<div class="r" style="left:1168px;top:1016px;width:722px;height:24px;background:#363636;"></div>
<div class="r" style="left:1168px;top:1016px;width:24px;height:24px;background:#4a4a4a;"></div>
<svg class="r" style="left:1168px;top:1016px;" width="24" height="24" viewBox="0 0 24 24"><path d="M15 6 L9 12 L15 18z" fill="#8f8f8f"></path></svg>
<div class="r" style="left:1194px;top:1017px;width:446px;height:22px;background:#505050;"></div>
<div class="r" style="left:1866px;top:1016px;width:24px;height:24px;background:#4a4a4a;"></div>
<svg class="r" style="left:1866px;top:1016px;" width="24" height="24" viewBox="0 0 24 24"><path d="M9 6 L15 12 L9 18z" fill="#8f8f8f"></path></svg>
<div class="r" style="left:0px;top:1046px;width:1920px;height:1px;background:#474747;"></div>
<div class="r" style="left:0px;top:1047px;width:1920px;height:31px;background:#262626;"></div>
<div class="r" style="left:0px;top:1078px;width:1920px;height:2px;background:#111111;"></div>
<span class="t " style="left: 10.12px; top: 1054.11px; font-size: 17px; color: rgb(230, 230, 230); transform: scaleX(0.884);">Ready</span>
<div class="r" style="left:1494px;top:1047px;width:57px;height:31px;background:#474747;"></div>
<svg class="r" style="left:1511px;top:1051px;" width="24" height="22" viewBox="0 0 24 22"><path d="M2 2h20v18H2z M2 8h20M2 14h20M8.7 2v18M15.3 2v18" stroke="#fff" stroke-width="1.3" fill="none"></path></svg>
<svg class="r" style="left:1568px;top:1051px;" width="24" height="22" viewBox="0 0 24 22"><rect x="2" y="2" width="19" height="18" fill="none" stroke="#fff" stroke-width="1.3"></rect><rect x="6" y="5" width="11" height="12" fill="none" stroke="#fff" stroke-width="1.1"></rect><path d="M8 9h7M8 12h7" stroke="#fff" stroke-width="1"></path></svg>
<svg class="r" style="left:1624px;top:1051px;" width="24" height="22" viewBox="0 0 24 22"><rect x="2" y="2" width="19" height="18" fill="none" stroke="#fff" stroke-width="1.3"></rect><rect x="4" y="2" width="6" height="9" fill="#fff"></rect><rect x="12" y="2" width="6" height="12" fill="#fff"></rect></svg>
<div class="r" style="left:1671px;top:1060.5px;width:11px;height:3px;background:#fff;"></div>
<div class="r" style="left:1688px;top:1061px;width:148px;height:2px;background:#fff;"></div>
<div class="r" style="left:1759px;top:1054px;width:7px;height:17px;background:#fff;"></div>
<div class="r" style="left:1841px;top:1061px;width:12px;height:2px;background:#fff;"></div>
<div class="r" style="left:1846px;top:1056px;width:2px;height:12px;background:#fff;"></div>
<span class="t " style="left: 1869.08px; top: 1054.11px; font-size: 17px; color: rgb(230, 230, 230); transform: scaleX(0.9206);">100%</span>

</body></html>
